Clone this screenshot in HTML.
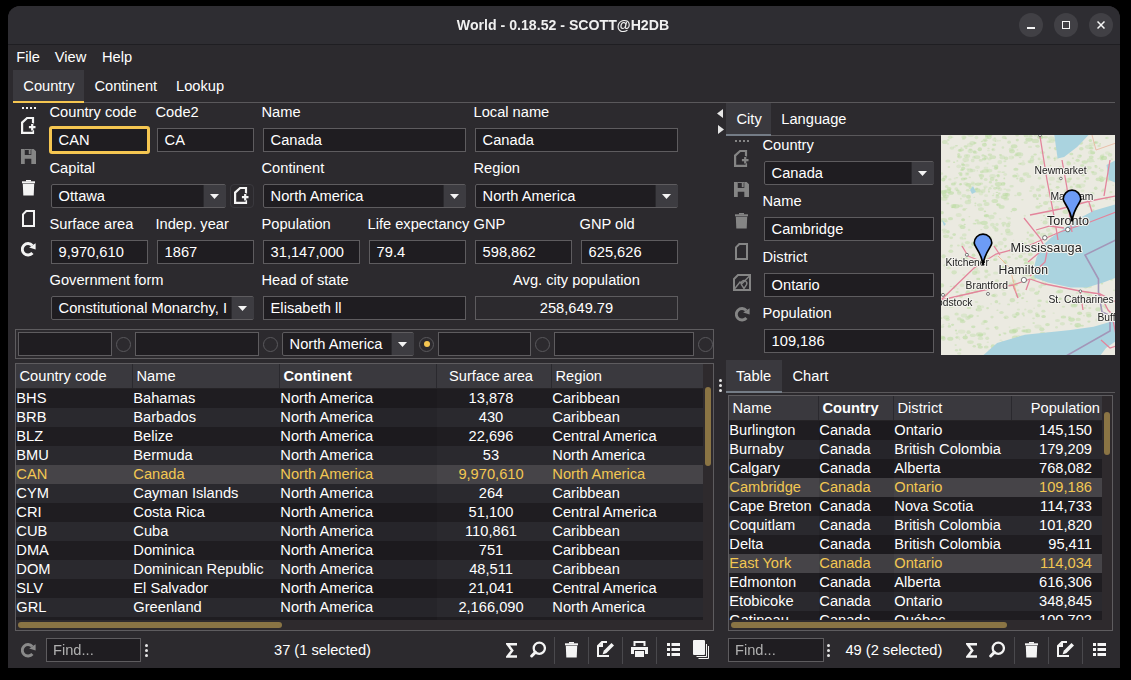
<!DOCTYPE html>
<html><head><meta charset="utf-8"><style>
html,body{margin:0;padding:0;background:#000;width:1131px;height:680px;overflow:hidden}
body{position:relative;font-family:"Liberation Sans",sans-serif;font-size:14.667px;color:#ffffff}
.t{position:absolute;white-space:pre;line-height:17px}
.r{position:absolute}
</style></head><body>
<div class="r" style="left:8px;top:6px;width:1112px;height:662px;background:#2c2a2e;border-radius:12px 12px 0 0"></div>
<div class="r" style="left:8px;top:6px;width:1112px;height:38px;background:#2e2d32;border-radius:12px 12px 0 0"></div>
<div class="r" style="left:8px;top:44px;width:1112px;height:1px;background:#1f1e22"></div>
<div class="t" style="left:7px;width:1112px;top:17px;text-align:center;font-weight:bold;font-size:14.15px;color:#f0f0f0;will-change:transform;">World - 0.18.52 - SCOTT@H2DB</div>
<div class="r" style="left:1019px;top:13px;width:24px;height:24px;border-radius:50%;background:#414045"></div>
<div class="r" style="left:1054px;top:13px;width:24px;height:24px;border-radius:50%;background:#414045"></div>
<div class="r" style="left:1089px;top:13px;width:24px;height:24px;border-radius:50%;background:#414045"></div>
<div class="r" style="left:1027px;top:27px;width:8px;height:1.5px;background:#f6f6f6"></div>
<div class="r" style="left:1062px;top:21px;width:8px;height:8px;border:1.5px solid #f6f6f6;box-sizing:border-box"></div>
<svg class="r" style="left:1097px;top:21px" width="8" height="8" viewBox="0 0 8 8"><path d="M0.5 0.5L7.5 7.5M7.5 0.5L0.5 7.5" stroke="#f6f6f6" stroke-width="1.5"/></svg>
<div class="t" style="left:16.30px;top:49px;">File</div>
<div class="t" style="left:54.80px;top:49px;">View</div>
<div class="t" style="left:101.90px;top:49px;">Help</div>
<div class="r" style="left:13px;top:70px;width:71px;height:31px;background:#3a393e"></div>
<div class="r" style="left:13px;top:102px;width:1102px;height:1px;background:#5a585b"></div>
<div class="r" style="left:13px;top:101px;width:71px;height:2px;background:#f5c651"></div>
<div class="t" style="left:23.30px;top:78px;">Country</div>
<div class="t" style="left:94.40px;top:78px;">Continent</div>
<div class="t" style="left:176.00px;top:78px;">Lookup</div>
<div class="r" style="left:22px;top:107px;width:2px;height:2px;background:#f4f4f4"></div><div class="r" style="left:26px;top:107px;width:2px;height:2px;background:#f4f4f4"></div><div class="r" style="left:30px;top:107px;width:2px;height:2px;background:#f4f4f4"></div><div class="r" style="left:34px;top:107px;width:2px;height:2px;background:#f4f4f4"></div>
<svg class="r" style="left:20.5px;top:116px" width="16" height="18" viewBox="0 0 16 18"><path d="M12 7.6V2H6.1L1.1 6.6V16.9H12V14.2" fill="none" stroke="#f4f4f4" stroke-width="2.2"/><path d="M7 11.2H15.6M11.2 7V15.4" stroke="#2c2a2e" stroke-width="1.2"/><path d="M7.9 11.2H14.5M11.2 7.9V14.5" stroke="#f4f4f4" stroke-width="2.2"/></svg>
<svg class="r" style="left:21px;top:149px" width="15" height="15" viewBox="0 0 16 16"><path d="M0 0H4V6.5H11V0H13.5L16 2.5V16H11V10.5H4V16H0Z" fill="#858585"/><rect x="4" y="0" width="7" height="1" fill="#858585"/><rect x="8.3" y="1" width="2" height="4.5" fill="#858585"/></svg>
<svg class="r" style="left:21.5px;top:180px" width="13" height="16" viewBox="0 0 13 16"><rect x="0" y="1.3" width="13" height="2" fill="#f4f4f4"/><rect x="4" y="0" width="5" height="1.6" fill="#f4f4f4"/><path d="M0.8 3.8H12.2L11.7 15.5H1.3Z" fill="#f4f4f4"/></svg>
<svg class="r" style="left:21.5px;top:210px" width="13" height="17" viewBox="0 0 13 17"><path d="M4.3 1H12V16H1V4.3Z" fill="none" stroke="#f4f4f4" stroke-width="2"/></svg>
<svg class="r" style="left:21px;top:242px" width="15" height="15" viewBox="0 0 15 15"><path d="M11.4 11A5.75 5.75 0 1 1 11.3 3.4" fill="none" stroke="#f4f4f4" stroke-width="2.9"/><path d="M14.6 1.2L14.6 7.6L8.2 5.6Z" fill="#f4f4f4"/></svg>
<div class="t" style="left:49.50px;top:104px;">Country code</div>
<div class="t" style="left:155.50px;top:104px;">Code2</div>
<div class="t" style="left:261.50px;top:104px;">Name</div>
<div class="t" style="left:473.50px;top:104px;">Local name</div>
<div class="r" style="left:51px;top:128px;width:97px;height:24px;background:#1f1d21;border:1px solid #5e5c5f;box-sizing:border-box"></div><div class="r" style="left:49px;top:126px;width:101px;height:28px;border:3px solid #f5c651;box-sizing:border-box;border-radius:3px"></div><div class="t" style="left:58.60px;top:132px;">CAN</div>
<div class="r" style="left:157px;top:128px;width:97px;height:24px;background:#1f1d21;border:1px solid #5e5c5f;box-sizing:border-box"></div><div class="t" style="left:164.60px;top:132px;">CA</div>
<div class="r" style="left:263px;top:128px;width:203px;height:24px;background:#1f1d21;border:1px solid #5e5c5f;box-sizing:border-box"></div><div class="t" style="left:270.60px;top:132px;">Canada</div>
<div class="r" style="left:475px;top:128px;width:203px;height:24px;background:#1f1d21;border:1px solid #5e5c5f;box-sizing:border-box"></div><div class="t" style="left:482.60px;top:132px;">Canada</div>
<div class="t" style="left:49.50px;top:160px;">Capital</div>
<div class="t" style="left:261.50px;top:160px;">Continent</div>
<div class="t" style="left:473.50px;top:160px;">Region</div>
<div class="r" style="left:51px;top:184px;width:175px;height:24px;background:#1f1d21;border:1px solid #5e5c5f;box-sizing:border-box;border-radius:2px"></div><div class="r" style="left:203px;top:185px;width:22px;height:22px;background:#3d3c41;border-left:1px solid #2a292d;border-radius:0 1px 1px 0"></div><svg class="r" style="left:210px;top:194px" width="9" height="5" viewBox="0 0 9 5"><path d="M0 0H9L4.5 5Z" fill="#f4f4f4"/></svg><div class="t" style="left:58.60px;top:188px;">Ottawa</div>
<div class="r" style="left:263px;top:184px;width:203px;height:24px;background:#1f1d21;border:1px solid #5e5c5f;box-sizing:border-box;border-radius:2px"></div><div class="r" style="left:443px;top:185px;width:22px;height:22px;background:#3d3c41;border-left:1px solid #2a292d;border-radius:0 1px 1px 0"></div><svg class="r" style="left:450px;top:194px" width="9" height="5" viewBox="0 0 9 5"><path d="M0 0H9L4.5 5Z" fill="#f4f4f4"/></svg><div class="t" style="left:270.60px;top:188px;">North America</div>
<div class="r" style="left:475px;top:184px;width:203px;height:24px;background:#1f1d21;border:1px solid #5e5c5f;box-sizing:border-box;border-radius:2px"></div><div class="r" style="left:655px;top:185px;width:22px;height:22px;background:#3d3c41;border-left:1px solid #2a292d;border-radius:0 1px 1px 0"></div><svg class="r" style="left:662px;top:194px" width="9" height="5" viewBox="0 0 9 5"><path d="M0 0H9L4.5 5Z" fill="#f4f4f4"/></svg><div class="t" style="left:482.60px;top:188px;">North America</div>
<div class="r" style="left:230px;top:184px;width:24px;height:24px;border:1px solid #3a393e;box-sizing:border-box;border-radius:4px"></div>
<svg class="r" style="left:234px;top:186px" width="16" height="18" viewBox="0 0 16 18"><path d="M12 7.6V2H6.1L1.1 6.6V16.9H12V14.2" fill="none" stroke="#f4f4f4" stroke-width="2.2"/><path d="M7 11.2H15.6M11.2 7V15.4" stroke="#2c2a2e" stroke-width="1.2"/><path d="M7.9 11.2H14.5M11.2 7.9V14.5" stroke="#f4f4f4" stroke-width="2.2"/></svg>
<div class="t" style="left:49.50px;top:216px;">Surface area</div>
<div class="r" style="left:51px;top:240px;width:97px;height:24px;background:#1f1d21;border:1px solid #5e5c5f;box-sizing:border-box"></div><div class="t" style="left:58.60px;top:244px;">9,970,610</div>
<div class="t" style="left:155.50px;top:216px;">Indep. year</div>
<div class="r" style="left:157px;top:240px;width:97px;height:24px;background:#1f1d21;border:1px solid #5e5c5f;box-sizing:border-box"></div><div class="t" style="left:164.60px;top:244px;">1867</div>
<div class="t" style="left:261.50px;top:216px;">Population</div>
<div class="r" style="left:263px;top:240px;width:97px;height:24px;background:#1f1d21;border:1px solid #5e5c5f;box-sizing:border-box"></div><div class="t" style="left:270.60px;top:244px;">31,147,000</div>
<div class="t" style="left:367.50px;top:216px;">Life expectancy</div>
<div class="r" style="left:369px;top:240px;width:97px;height:24px;background:#1f1d21;border:1px solid #5e5c5f;box-sizing:border-box"></div><div class="t" style="left:376.60px;top:244px;">79.4</div>
<div class="t" style="left:473.50px;top:216px;">GNP</div>
<div class="r" style="left:475px;top:240px;width:97px;height:24px;background:#1f1d21;border:1px solid #5e5c5f;box-sizing:border-box"></div><div class="t" style="left:482.60px;top:244px;">598,862</div>
<div class="t" style="left:579.50px;top:216px;">GNP old</div>
<div class="r" style="left:581px;top:240px;width:97px;height:24px;background:#1f1d21;border:1px solid #5e5c5f;box-sizing:border-box"></div><div class="t" style="left:588.60px;top:244px;">625,626</div>
<div class="t" style="left:49.50px;top:272px;">Government form</div>
<div class="t" style="left:261.50px;top:272px;">Head of state</div>
<div class="t" style="left:475px;width:203px;top:272px;text-align:center;">Avg. city population</div>
<div class="r" style="left:51px;top:296px;width:203px;height:24px;background:#1f1d21;border:1px solid #5e5c5f;box-sizing:border-box;border-radius:2px"></div><div class="r" style="left:231px;top:297px;width:22px;height:22px;background:#3d3c41;border-left:1px solid #2a292d;border-radius:0 1px 1px 0"></div><svg class="r" style="left:238px;top:306px" width="9" height="5" viewBox="0 0 9 5"><path d="M0 0H9L4.5 5Z" fill="#f4f4f4"/></svg><div class="t" style="left:58.60px;top:300px;">Constitutional Monarchy, I</div>
<div class="r" style="left:263px;top:296px;width:203px;height:24px;background:#1f1d21;border:1px solid #5e5c5f;box-sizing:border-box"></div><div class="t" style="left:270.60px;top:300px;">Elisabeth ll</div>
<div class="r" style="left:475px;top:296px;width:203px;height:24px;border:1px solid #5e5c5f;box-sizing:border-box"></div>
<div class="t" style="left:475px;width:203px;top:300px;text-align:center;">258,649.79</div>
<svg class="r" style="left:717px;top:109px" width="6" height="9" viewBox="0 0 6 9"><path d="M6 0V9L0 4.5Z" fill="#e6e6e6"/></svg>
<svg class="r" style="left:718px;top:125px" width="6" height="9" viewBox="0 0 6 9"><path d="M0 0V9L6 4.5Z" fill="#e6e6e6"/></svg>
<div class="r" style="left:719px;top:379px;width:3px;height:3px;border-radius:50%;background:#e6e6e6"></div><div class="r" style="left:719px;top:384px;width:3px;height:3px;border-radius:50%;background:#e6e6e6"></div><div class="r" style="left:719px;top:389px;width:3px;height:3px;border-radius:50%;background:#e6e6e6"></div>
<div class="r" style="left:15px;top:329px;width:699px;height:30px;border:1px solid #5e5c5f;box-sizing:border-box"></div>
<div class="r" style="left:18px;top:332px;width:94px;height:24px;background:#1f1d21;border:1px solid #5e5c5f;box-sizing:border-box"></div>
<div class="r" style="left:115.5px;top:336.5px;width:15px;height:15px;border-radius:50%;border:1px solid #59585c;box-sizing:border-box"></div>
<div class="r" style="left:135px;top:332px;width:124px;height:24px;background:#1f1d21;border:1px solid #5e5c5f;box-sizing:border-box"></div>
<div class="r" style="left:262.5px;top:336.5px;width:15px;height:15px;border-radius:50%;border:1px solid #59585c;box-sizing:border-box"></div>
<div class="r" style="left:282px;top:332px;width:132px;height:24px;background:#1f1d21;border:1px solid #5e5c5f;box-sizing:border-box;border-radius:2px"></div><div class="r" style="left:391px;top:333px;width:22px;height:22px;background:#3d3c41;border-left:1px solid #2a292d;border-radius:0 1px 1px 0"></div><svg class="r" style="left:398px;top:342px" width="9" height="5" viewBox="0 0 9 5"><path d="M0 0H9L4.5 5Z" fill="#f4f4f4"/></svg><div class="t" style="left:289.60px;top:336px;">North America</div>
<div class="r" style="left:419.0px;top:336.5px;width:15px;height:15px;border-radius:50%;border:1px solid #59585c;box-sizing:border-box"></div><div class="r" style="left:423.5px;top:341px;width:6px;height:6px;border-radius:50%;background:#f5c651"></div>
<div class="r" style="left:438px;top:332px;width:93px;height:24px;background:#1f1d21;border:1px solid #5e5c5f;box-sizing:border-box"></div>
<div class="r" style="left:534.5px;top:336.5px;width:15px;height:15px;border-radius:50%;border:1px solid #59585c;box-sizing:border-box"></div>
<div class="r" style="left:554px;top:332px;width:140px;height:24px;background:#1f1d21;border:1px solid #5e5c5f;box-sizing:border-box"></div>
<div class="r" style="left:698.0px;top:336.5px;width:15px;height:15px;border-radius:50%;border:1px solid #59585c;box-sizing:border-box"></div>
<div class="r" style="left:15px;top:363px;width:699px;height:268px;border:1px solid #5e5c5f;box-sizing:border-box"></div><div class="r" style="left:703px;top:364px;width:10px;height:266px;background:#2e2a2d"></div><div class="r" style="left:16px;top:620px;width:687px;height:10px;background:#2e2a2d"></div><div class="r" style="left:16px;top:364px;width:687px;height:24px;background:#3a393e"></div><div class="r" style="left:16px;top:388px;width:687px;height:1px;background:#252326"></div><div class="t" style="left:19.50px;top:368px;">Country code</div><div class="r" style="left:132px;top:364px;width:1px;height:24px;background:#2a292e"></div><div class="t" style="left:136.50px;top:368px;">Name</div><div class="r" style="left:279px;top:364px;width:1px;height:24px;background:#2a292e"></div><div class="t" style="left:283.50px;top:368px;font-weight:bold;">Continent</div><div class="r" style="left:436px;top:364px;width:1px;height:24px;background:#2a292e"></div><div class="t" style="left:437px;width:108px;top:368px;text-align:center;">Surface area</div><div class="r" style="left:551px;top:364px;width:1px;height:24px;background:#2a292e"></div><div class="t" style="left:555.50px;top:368px;">Region</div><div class="r" style="left:16px;top:389px;width:687px;height:231px;overflow:hidden"><div class="r" style="left:0;top:0px;width:687px;height:19px;background:#1f1d21"></div><div class="r" style="left:264px;top:0px;width:157px;height:19px;background:rgba(0,0,0,0.08)"></div><div class="t" style="left:0.30px;top:1px;">BHS</div><div class="t" style="left:117.30px;top:1px;">Bahamas</div><div class="t" style="left:264.30px;top:1px;">North America</div><div class="t" style="left:421px;width:108px;top:1px;text-align:center;">13,878</div><div class="t" style="left:536.30px;top:1px;">Caribbean</div><div class="r" style="left:0;top:19px;width:687px;height:19px;background:#2a292e"></div><div class="r" style="left:264px;top:19px;width:157px;height:19px;background:rgba(0,0,0,0.08)"></div><div class="t" style="left:0.30px;top:20px;">BRB</div><div class="t" style="left:117.30px;top:20px;">Barbados</div><div class="t" style="left:264.30px;top:20px;">North America</div><div class="t" style="left:421px;width:108px;top:20px;text-align:center;">430</div><div class="t" style="left:536.30px;top:20px;">Caribbean</div><div class="r" style="left:0;top:38px;width:687px;height:19px;background:#1f1d21"></div><div class="r" style="left:264px;top:38px;width:157px;height:19px;background:rgba(0,0,0,0.08)"></div><div class="t" style="left:0.30px;top:39px;">BLZ</div><div class="t" style="left:117.30px;top:39px;">Belize</div><div class="t" style="left:264.30px;top:39px;">North America</div><div class="t" style="left:421px;width:108px;top:39px;text-align:center;">22,696</div><div class="t" style="left:536.30px;top:39px;">Central America</div><div class="r" style="left:0;top:57px;width:687px;height:19px;background:#2a292e"></div><div class="r" style="left:264px;top:57px;width:157px;height:19px;background:rgba(0,0,0,0.08)"></div><div class="t" style="left:0.30px;top:58px;">BMU</div><div class="t" style="left:117.30px;top:58px;">Bermuda</div><div class="t" style="left:264.30px;top:58px;">North America</div><div class="t" style="left:421px;width:108px;top:58px;text-align:center;">53</div><div class="t" style="left:536.30px;top:58px;">North America</div><div class="r" style="left:0;top:76px;width:687px;height:19px;background:#464448"></div><div class="r" style="left:264px;top:76px;width:157px;height:19px;background:rgba(0,0,0,0.08)"></div><div class="t" style="left:0.30px;top:77px;color:#f2c752;">CAN</div><div class="t" style="left:117.30px;top:77px;color:#f2c752;">Canada</div><div class="t" style="left:264.30px;top:77px;color:#f2c752;">North America</div><div class="t" style="left:421px;width:108px;top:77px;text-align:center;color:#f2c752;">9,970,610</div><div class="t" style="left:536.30px;top:77px;color:#f2c752;">North America</div><div class="r" style="left:0;top:95px;width:687px;height:19px;background:#2a292e"></div><div class="r" style="left:264px;top:95px;width:157px;height:19px;background:rgba(0,0,0,0.08)"></div><div class="t" style="left:0.30px;top:96px;">CYM</div><div class="t" style="left:117.30px;top:96px;">Cayman Islands</div><div class="t" style="left:264.30px;top:96px;">North America</div><div class="t" style="left:421px;width:108px;top:96px;text-align:center;">264</div><div class="t" style="left:536.30px;top:96px;">Caribbean</div><div class="r" style="left:0;top:114px;width:687px;height:19px;background:#1f1d21"></div><div class="r" style="left:264px;top:114px;width:157px;height:19px;background:rgba(0,0,0,0.08)"></div><div class="t" style="left:0.30px;top:115px;">CRI</div><div class="t" style="left:117.30px;top:115px;">Costa Rica</div><div class="t" style="left:264.30px;top:115px;">North America</div><div class="t" style="left:421px;width:108px;top:115px;text-align:center;">51,100</div><div class="t" style="left:536.30px;top:115px;">Central America</div><div class="r" style="left:0;top:133px;width:687px;height:19px;background:#2a292e"></div><div class="r" style="left:264px;top:133px;width:157px;height:19px;background:rgba(0,0,0,0.08)"></div><div class="t" style="left:0.30px;top:134px;">CUB</div><div class="t" style="left:117.30px;top:134px;">Cuba</div><div class="t" style="left:264.30px;top:134px;">North America</div><div class="t" style="left:421px;width:108px;top:134px;text-align:center;">110,861</div><div class="t" style="left:536.30px;top:134px;">Caribbean</div><div class="r" style="left:0;top:152px;width:687px;height:19px;background:#1f1d21"></div><div class="r" style="left:264px;top:152px;width:157px;height:19px;background:rgba(0,0,0,0.08)"></div><div class="t" style="left:0.30px;top:153px;">DMA</div><div class="t" style="left:117.30px;top:153px;">Dominica</div><div class="t" style="left:264.30px;top:153px;">North America</div><div class="t" style="left:421px;width:108px;top:153px;text-align:center;">751</div><div class="t" style="left:536.30px;top:153px;">Caribbean</div><div class="r" style="left:0;top:171px;width:687px;height:19px;background:#2a292e"></div><div class="r" style="left:264px;top:171px;width:157px;height:19px;background:rgba(0,0,0,0.08)"></div><div class="t" style="left:0.30px;top:172px;">DOM</div><div class="t" style="left:117.30px;top:172px;">Dominican Republic</div><div class="t" style="left:264.30px;top:172px;">North America</div><div class="t" style="left:421px;width:108px;top:172px;text-align:center;">48,511</div><div class="t" style="left:536.30px;top:172px;">Caribbean</div><div class="r" style="left:0;top:190px;width:687px;height:19px;background:#1f1d21"></div><div class="r" style="left:264px;top:190px;width:157px;height:19px;background:rgba(0,0,0,0.08)"></div><div class="t" style="left:0.30px;top:191px;">SLV</div><div class="t" style="left:117.30px;top:191px;">El Salvador</div><div class="t" style="left:264.30px;top:191px;">North America</div><div class="t" style="left:421px;width:108px;top:191px;text-align:center;">21,041</div><div class="t" style="left:536.30px;top:191px;">Central America</div><div class="r" style="left:0;top:209px;width:687px;height:19px;background:#2a292e"></div><div class="r" style="left:264px;top:209px;width:157px;height:19px;background:rgba(0,0,0,0.08)"></div><div class="t" style="left:0.30px;top:210px;">GRL</div><div class="t" style="left:117.30px;top:210px;">Greenland</div><div class="t" style="left:264.30px;top:210px;">North America</div><div class="t" style="left:421px;width:108px;top:210px;text-align:center;">2,166,090</div><div class="t" style="left:536.30px;top:210px;">North America</div><div class="r" style="left:0;top:228px;width:687px;height:19px;background:#1f1d21"></div><div class="r" style="left:264px;top:228px;width:157px;height:19px;background:rgba(0,0,0,0.08)"></div><div class="t" style="left:0.30px;top:229px;"></div><div class="t" style="left:117.30px;top:229px;"></div><div class="t" style="left:264.30px;top:229px;"></div><div class="t" style="left:421px;width:108px;top:229px;text-align:center;"></div><div class="t" style="left:536.30px;top:229px;"></div></div><div class="r" style="left:705px;top:387px;width:6px;height:79px;background:#8a7444;border-radius:3px"></div><div class="r" style="left:18px;top:622px;width:264px;height:6px;background:#8a7444;border-radius:3px"></div>
<svg class="r" style="left:21px;top:643px" width="15" height="15" viewBox="0 0 15 15"><path d="M11.4 11A5.75 5.75 0 1 1 11.3 3.4" fill="none" stroke="#8a8a8a" stroke-width="2.9"/><path d="M14.6 1.2L14.6 7.6L8.2 5.6Z" fill="#8a8a8a"/></svg>
<div class="r" style="left:46px;top:638px;width:95px;height:24px;background:#1f1d21;border:1px solid #5e5c5f;box-sizing:border-box"></div>
<div class="t" style="left:53.30px;top:642px;color:#b0b0b0;will-change:transform;">Find...</div>
<div class="r" style="left:145px;top:643.5px;width:3px;height:3px;border-radius:50%;background:#e6e6e6"></div><div class="r" style="left:145px;top:648.5px;width:3px;height:3px;border-radius:50%;background:#e6e6e6"></div><div class="r" style="left:145px;top:653.5px;width:3px;height:3px;border-radius:50%;background:#e6e6e6"></div>
<div class="t" style="left:274.00px;top:642px;">37 (1 selected)</div>
<svg class="r" style="left:505.5px;top:642.5px" width="12" height="15" viewBox="0 0 12 15"><path d="M11 1.3H1.6L6.2 7.4L1.6 13.5H11" fill="none" stroke="#f4f4f4" stroke-width="2.5" stroke-linejoin="miter" stroke-miterlimit="3"/></svg>
<svg class="r" style="left:529.7px;top:641px" width="16" height="17" viewBox="0 0 16 17"><circle cx="9.3" cy="7.2" r="5.6" fill="none" stroke="#f4f4f4" stroke-width="2.3"/><path d="M5.3 11.4L1.7 15" stroke="#f4f4f4" stroke-width="3" stroke-linecap="round"/></svg>
<div class="r" style="left:554px;top:637px;width:1px;height:27px;background:#4a494d"></div>
<div class="r" style="left:588px;top:637px;width:1px;height:27px;background:#4a494d"></div>
<div class="r" style="left:622px;top:637px;width:1px;height:27px;background:#4a494d"></div>
<div class="r" style="left:656px;top:637px;width:1px;height:27px;background:#4a494d"></div>
<svg class="r" style="left:564.8px;top:642px" width="13" height="16" viewBox="0 0 13 16"><rect x="0" y="1.3" width="13" height="2" fill="#f4f4f4"/><rect x="4" y="0" width="5" height="1.6" fill="#f4f4f4"/><path d="M0.8 3.8H12.2L11.7 15.5H1.3Z" fill="#f4f4f4"/></svg>
<svg class="r" style="left:596.5px;top:641px" width="18" height="16" viewBox="0 0 18 16"><path d="M5 1H10 M12 15H1V5L5 1V5H1" fill="none" stroke="#f4f4f4" stroke-width="2"/><path d="M6.5 12.5L7 9.5L14.5 2L17 4.5L9.5 12Z" fill="#f4f4f4"/><path d="M5.5 13.5L7 9.5L9.5 12Z" fill="#f4f4f4"/></svg>
<svg class="r" style="left:631px;top:641px" width="17" height="16" viewBox="0 0 17 16"><path d="M3.5 5V1H13.5V5" fill="none" stroke="#f4f4f4" stroke-width="2"/><path d="M0 6H17V13H14V9H3V13H0Z" fill="#f4f4f4"/><rect x="4" y="10" width="9" height="6" fill="#f4f4f4"/></svg>
<svg class="r" style="left:667px;top:643px" width="14" height="13" viewBox="0 0 14 13"><rect x="0" y="0" width="3" height="3" fill="#f4f4f4"/><rect x="4.5" y="0" width="8.5" height="3" fill="#f4f4f4"/><rect x="0" y="5" width="3" height="3" fill="#f4f4f4"/><rect x="4.5" y="5" width="8.5" height="3" fill="#f4f4f4"/><rect x="0" y="10" width="3" height="3" fill="#f4f4f4"/><rect x="4.5" y="10" width="8.5" height="3" fill="#f4f4f4"/></svg>
<svg class="r" style="left:692.5px;top:640px" width="16" height="19" viewBox="0 0 16 19"><path d="M3.5 16.5H13.5V4 M5.5 18.5H15.5V6" fill="none" stroke="#f4f4f4" stroke-width="1"/><rect x="0" y="0" width="12" height="15" rx="1" fill="#f4f4f4"/></svg>
<div class="r" style="left:726px;top:103px;width:45px;height:32px;background:#3a393e"></div>
<div class="r" style="left:726px;top:135px;width:389px;height:1px;background:#5a585b"></div>
<div class="r" style="left:726px;top:134px;width:45px;height:2px;background:#747c86"></div>
<div class="t" style="left:736.50px;top:111px;">City</div>
<div class="t" style="left:781.30px;top:111px;">Language</div>
<div class="r" style="left:735px;top:140px;width:2px;height:2px;background:#858585"></div><div class="r" style="left:739px;top:140px;width:2px;height:2px;background:#858585"></div><div class="r" style="left:743px;top:140px;width:2px;height:2px;background:#858585"></div><div class="r" style="left:747px;top:140px;width:2px;height:2px;background:#858585"></div>
<svg class="r" style="left:733.5px;top:149px" width="16" height="18" viewBox="0 0 16 18"><path d="M12 7.6V2H6.1L1.1 6.6V16.9H12V14.2" fill="none" stroke="#858585" stroke-width="2.2"/><path d="M7 11.2H15.6M11.2 7V15.4" stroke="#2c2a2e" stroke-width="1.2"/><path d="M7.9 11.2H14.5M11.2 7.9V14.5" stroke="#858585" stroke-width="2.2"/></svg>
<svg class="r" style="left:734px;top:182px" width="15" height="15" viewBox="0 0 16 16"><path d="M0 0H4V6.5H11V0H13.5L16 2.5V16H11V10.5H4V16H0Z" fill="#858585"/><rect x="4" y="0" width="7" height="1" fill="#858585"/><rect x="8.3" y="1" width="2" height="4.5" fill="#858585"/></svg>
<svg class="r" style="left:735px;top:213px" width="13" height="16" viewBox="0 0 13 16"><rect x="0" y="1.3" width="13" height="2" fill="#858585"/><rect x="4" y="0" width="5" height="1.6" fill="#858585"/><path d="M0.8 3.8H12.2L11.7 15.5H1.3Z" fill="#858585"/></svg>
<svg class="r" style="left:735px;top:243px" width="13" height="17" viewBox="0 0 13 17"><path d="M4.3 1H12V16H1V4.3Z" fill="none" stroke="#858585" stroke-width="2"/></svg>
<svg class="r" style="left:733px;top:273.5px" width="18" height="18" viewBox="0 0 18 18"><path d="M1 5L5 1H17V16H1Z" fill="none" stroke="#858585" stroke-width="2"/><path d="M1.5 15L7 8L9 9.5L16.5 2" fill="none" stroke="#858585" stroke-width="1.4"/><path d="M11 14.5L8.6 10.8A2.8 2.8 0 1 1 13.4 10.8Z" fill="none" stroke="#858585" stroke-width="1.4"/></svg>
<svg class="r" style="left:735px;top:306.5px" width="15" height="15" viewBox="0 0 15 15"><path d="M11.4 11A5.75 5.75 0 1 1 11.3 3.4" fill="none" stroke="#858585" stroke-width="2.9"/><path d="M14.6 1.2L14.6 7.6L8.2 5.6Z" fill="#858585"/></svg>
<div class="t" style="left:762.50px;top:137px;">Country</div>
<div class="r" style="left:764px;top:161px;width:170px;height:24px;background:#1f1d21;border:1px solid #5e5c5f;box-sizing:border-box;border-radius:2px"></div><div class="r" style="left:911px;top:162px;width:22px;height:22px;background:#3d3c41;border-left:1px solid #2a292d;border-radius:0 1px 1px 0"></div><svg class="r" style="left:918px;top:171px" width="9" height="5" viewBox="0 0 9 5"><path d="M0 0H9L4.5 5Z" fill="#f4f4f4"/></svg><div class="t" style="left:771.60px;top:165px;">Canada</div>
<div class="t" style="left:762.50px;top:193px;">Name</div>
<div class="r" style="left:764px;top:217px;width:170px;height:24px;background:#1f1d21;border:1px solid #5e5c5f;box-sizing:border-box"></div><div class="t" style="left:771.60px;top:221px;">Cambridge</div>
<div class="t" style="left:762.50px;top:249px;">District</div>
<div class="r" style="left:764px;top:273px;width:170px;height:24px;background:#1f1d21;border:1px solid #5e5c5f;box-sizing:border-box"></div><div class="t" style="left:771.60px;top:277px;">Ontario</div>
<div class="t" style="left:762.50px;top:305px;">Population</div>
<div class="r" style="left:764px;top:329px;width:170px;height:24px;background:#1f1d21;border:1px solid #5e5c5f;box-sizing:border-box"></div><div class="t" style="left:771.60px;top:333px;">109,186</div>
<svg class="r" style="left:941px;top:135px" width="174" height="220" viewBox="941 135 174 220"><defs><clipPath id="mc"><rect x="941" y="135" width="174" height="220"/></clipPath></defs><g clip-path="url(#mc)"><rect x="941" y="135" width="174" height="220" fill="#ebeae1"/><ellipse cx="997.3" cy="168.2" rx="1.0" ry="0.7" fill="#b9dba0" opacity="0.38"/><ellipse cx="951.1" cy="246.6" rx="1.4" ry="1.3" fill="#b9dba0" opacity="0.28"/><ellipse cx="1014.9" cy="316.9" rx="1.4" ry="1.0" fill="#b9dba0" opacity="0.58"/><ellipse cx="949.1" cy="323.9" rx="0.9" ry="0.8" fill="#b9dba0" opacity="0.36"/><ellipse cx="1083.0" cy="174.8" rx="2.1" ry="1.6" fill="#b9dba0" opacity="0.44"/><ellipse cx="951.9" cy="148.1" rx="2.3" ry="1.7" fill="#b9dba0" opacity="0.36"/><ellipse cx="1042.9" cy="234.7" rx="2.9" ry="1.9" fill="#b9dba0" opacity="0.34"/><ellipse cx="967.4" cy="242.6" rx="2.7" ry="1.7" fill="#b9dba0" opacity="0.45"/><ellipse cx="1044.4" cy="262.6" rx="3.4" ry="1.9" fill="#b9dba0" opacity="0.42"/><ellipse cx="1056.6" cy="148.3" rx="2.9" ry="1.6" fill="#b9dba0" opacity="0.54"/><ellipse cx="990.5" cy="219.9" rx="0.9" ry="0.6" fill="#b9dba0" opacity="0.31"/><ellipse cx="961.4" cy="148.0" rx="1.0" ry="0.8" fill="#b9dba0" opacity="0.39"/><ellipse cx="1092.6" cy="152.7" rx="2.5" ry="1.5" fill="#b9dba0" opacity="0.54"/><ellipse cx="1091.3" cy="196.3" rx="2.0" ry="1.2" fill="#b9dba0" opacity="0.59"/><ellipse cx="967.3" cy="173.8" rx="1.4" ry="1.0" fill="#b9dba0" opacity="0.46"/><ellipse cx="986.7" cy="135.9" rx="1.7" ry="1.2" fill="#b9dba0" opacity="0.58"/><ellipse cx="1009.3" cy="222.8" rx="1.7" ry="1.6" fill="#b9dba0" opacity="0.27"/><ellipse cx="977.3" cy="170.7" rx="0.7" ry="0.7" fill="#b9dba0" opacity="0.30"/><ellipse cx="958.7" cy="215.0" rx="3.0" ry="2.0" fill="#b9dba0" opacity="0.30"/><ellipse cx="984.9" cy="211.4" rx="1.3" ry="0.8" fill="#b9dba0" opacity="0.60"/><ellipse cx="1022.1" cy="241.4" rx="1.0" ry="0.8" fill="#b9dba0" opacity="0.34"/><ellipse cx="1085.2" cy="170.5" rx="3.0" ry="2.1" fill="#b9dba0" opacity="0.30"/><ellipse cx="1035.5" cy="140.9" rx="3.7" ry="2.2" fill="#b9dba0" opacity="0.49"/><ellipse cx="986.4" cy="215.7" rx="2.6" ry="1.8" fill="#b9dba0" opacity="0.52"/><ellipse cx="998.4" cy="184.1" rx="3.7" ry="2.2" fill="#b9dba0" opacity="0.53"/><ellipse cx="1083.4" cy="297.8" rx="1.8" ry="1.4" fill="#b9dba0" opacity="0.26"/><ellipse cx="945.9" cy="196.5" rx="3.0" ry="1.7" fill="#b9dba0" opacity="0.41"/><ellipse cx="1004.4" cy="183.5" rx="1.1" ry="0.9" fill="#b9dba0" opacity="0.47"/><ellipse cx="1097.7" cy="319.9" rx="2.7" ry="1.6" fill="#b9dba0" opacity="0.28"/><ellipse cx="1071.5" cy="240.2" rx="2.4" ry="1.9" fill="#b9dba0" opacity="0.53"/><ellipse cx="1110.1" cy="222.1" rx="3.3" ry="2.1" fill="#b9dba0" opacity="0.31"/><ellipse cx="963.1" cy="168.3" rx="2.1" ry="1.9" fill="#b9dba0" opacity="0.54"/><ellipse cx="1111.6" cy="279.6" rx="1.6" ry="1.5" fill="#b9dba0" opacity="0.25"/><ellipse cx="1109.9" cy="277.9" rx="2.8" ry="2.1" fill="#b9dba0" opacity="0.56"/><ellipse cx="1084.8" cy="181.4" rx="1.3" ry="1.1" fill="#b9dba0" opacity="0.46"/><ellipse cx="986.1" cy="227.2" rx="2.6" ry="2.1" fill="#b9dba0" opacity="0.41"/><ellipse cx="1042.5" cy="333.9" rx="2.9" ry="2.1" fill="#b9dba0" opacity="0.44"/><ellipse cx="1032.1" cy="139.1" rx="0.9" ry="0.9" fill="#b9dba0" opacity="0.53"/><ellipse cx="1037.8" cy="206.7" rx="2.4" ry="1.5" fill="#b9dba0" opacity="0.29"/><ellipse cx="1038.5" cy="189.7" rx="2.6" ry="1.8" fill="#b9dba0" opacity="0.45"/><ellipse cx="1073.2" cy="335.7" rx="2.2" ry="1.6" fill="#b9dba0" opacity="0.43"/><ellipse cx="1061.5" cy="234.5" rx="2.4" ry="1.4" fill="#b9dba0" opacity="0.49"/><ellipse cx="1093.5" cy="342.3" rx="2.6" ry="1.5" fill="#b9dba0" opacity="0.54"/><ellipse cx="964.9" cy="161.8" rx="0.9" ry="0.7" fill="#b9dba0" opacity="0.28"/><ellipse cx="979.2" cy="344.6" rx="2.5" ry="1.4" fill="#b9dba0" opacity="0.54"/><ellipse cx="969.1" cy="229.9" rx="1.3" ry="1.1" fill="#b9dba0" opacity="0.36"/><ellipse cx="1066.7" cy="139.3" rx="1.3" ry="1.3" fill="#b9dba0" opacity="0.37"/><ellipse cx="1049.6" cy="247.7" rx="3.5" ry="2.2" fill="#b9dba0" opacity="0.59"/><ellipse cx="959.2" cy="193.4" rx="2.2" ry="1.8" fill="#b9dba0" opacity="0.30"/><ellipse cx="986.0" cy="167.9" rx="2.4" ry="1.5" fill="#b9dba0" opacity="0.28"/><ellipse cx="951.0" cy="286.4" rx="1.3" ry="0.7" fill="#b9dba0" opacity="0.47"/><ellipse cx="952.6" cy="324.8" rx="1.6" ry="1.1" fill="#b9dba0" opacity="0.57"/><ellipse cx="987.6" cy="163.4" rx="1.1" ry="1.0" fill="#b9dba0" opacity="0.31"/><ellipse cx="949.8" cy="179.4" rx="1.7" ry="1.1" fill="#b9dba0" opacity="0.35"/><ellipse cx="1028.0" cy="174.1" rx="0.8" ry="0.6" fill="#b9dba0" opacity="0.26"/><ellipse cx="1068.6" cy="256.2" rx="2.4" ry="1.4" fill="#b9dba0" opacity="0.29"/><ellipse cx="1083.5" cy="230.1" rx="2.5" ry="1.9" fill="#b9dba0" opacity="0.43"/><ellipse cx="1060.7" cy="351.1" rx="3.0" ry="1.9" fill="#b9dba0" opacity="0.47"/><ellipse cx="1011.4" cy="211.5" rx="0.9" ry="0.8" fill="#b9dba0" opacity="0.51"/><ellipse cx="985.5" cy="170.9" rx="3.3" ry="1.9" fill="#b9dba0" opacity="0.48"/><ellipse cx="990.1" cy="188.3" rx="1.5" ry="1.3" fill="#b9dba0" opacity="0.41"/><ellipse cx="994.9" cy="213.4" rx="1.7" ry="1.2" fill="#b9dba0" opacity="0.43"/><ellipse cx="976.0" cy="246.0" rx="1.1" ry="1.0" fill="#b9dba0" opacity="0.39"/><ellipse cx="948.3" cy="139.9" rx="1.4" ry="1.0" fill="#b9dba0" opacity="0.44"/><ellipse cx="1094.0" cy="220.7" rx="2.4" ry="2.2" fill="#b9dba0" opacity="0.50"/><ellipse cx="1082.3" cy="165.6" rx="2.3" ry="1.4" fill="#b9dba0" opacity="0.53"/><ellipse cx="1059.8" cy="287.5" rx="0.7" ry="0.6" fill="#b9dba0" opacity="0.38"/><ellipse cx="959.3" cy="318.9" rx="2.4" ry="1.6" fill="#b9dba0" opacity="0.49"/><ellipse cx="1026.1" cy="135.7" rx="2.5" ry="1.8" fill="#b9dba0" opacity="0.44"/><ellipse cx="1055.7" cy="149.5" rx="1.1" ry="1.0" fill="#b9dba0" opacity="0.34"/><ellipse cx="1067.9" cy="180.1" rx="3.0" ry="2.2" fill="#b9dba0" opacity="0.38"/><ellipse cx="1048.4" cy="276.4" rx="1.0" ry="0.8" fill="#b9dba0" opacity="0.51"/><ellipse cx="994.0" cy="259.9" rx="0.8" ry="0.7" fill="#b9dba0" opacity="0.49"/><ellipse cx="1061.4" cy="283.7" rx="2.0" ry="1.4" fill="#b9dba0" opacity="0.41"/><ellipse cx="961.6" cy="331.6" rx="3.8" ry="2.2" fill="#b9dba0" opacity="0.26"/><ellipse cx="1019.2" cy="194.1" rx="2.5" ry="2.1" fill="#b9dba0" opacity="0.45"/><ellipse cx="964.1" cy="315.4" rx="3.2" ry="2.0" fill="#b9dba0" opacity="0.33"/><ellipse cx="1097.2" cy="242.0" rx="0.8" ry="0.6" fill="#b9dba0" opacity="0.41"/><ellipse cx="993.5" cy="166.0" rx="1.8" ry="1.1" fill="#b9dba0" opacity="0.25"/><ellipse cx="1071.6" cy="319.6" rx="3.3" ry="2.1" fill="#b9dba0" opacity="0.57"/><ellipse cx="991.4" cy="216.9" rx="3.2" ry="2.2" fill="#b9dba0" opacity="0.38"/><ellipse cx="1015.5" cy="195.5" rx="1.3" ry="0.8" fill="#b9dba0" opacity="0.35"/><ellipse cx="1103.8" cy="189.9" rx="1.6" ry="1.4" fill="#b9dba0" opacity="0.38"/><ellipse cx="1036.6" cy="293.3" rx="2.4" ry="1.8" fill="#b9dba0" opacity="0.51"/><ellipse cx="1053.1" cy="198.0" rx="2.3" ry="2.1" fill="#b9dba0" opacity="0.42"/><ellipse cx="1110.9" cy="192.2" rx="1.6" ry="1.1" fill="#b9dba0" opacity="0.39"/><ellipse cx="970.1" cy="170.6" rx="2.9" ry="2.0" fill="#b9dba0" opacity="0.33"/><ellipse cx="1098.7" cy="354.2" rx="1.0" ry="0.8" fill="#b9dba0" opacity="0.28"/><ellipse cx="1000.5" cy="155.0" rx="1.5" ry="1.0" fill="#b9dba0" opacity="0.56"/><ellipse cx="1071.4" cy="225.8" rx="1.9" ry="1.4" fill="#b9dba0" opacity="0.37"/><ellipse cx="962.9" cy="245.7" rx="2.3" ry="2.0" fill="#b9dba0" opacity="0.34"/><ellipse cx="984.2" cy="222.9" rx="3.6" ry="2.1" fill="#b9dba0" opacity="0.56"/><ellipse cx="944.8" cy="142.1" rx="2.8" ry="2.0" fill="#b9dba0" opacity="0.46"/><ellipse cx="984.2" cy="159.0" rx="2.2" ry="1.4" fill="#b9dba0" opacity="0.58"/><ellipse cx="1020.6" cy="256.3" rx="2.2" ry="1.9" fill="#b9dba0" opacity="0.57"/><ellipse cx="1053.3" cy="201.8" rx="1.5" ry="1.0" fill="#b9dba0" opacity="0.49"/><ellipse cx="960.5" cy="150.5" rx="2.0" ry="1.5" fill="#b9dba0" opacity="0.33"/><ellipse cx="1045.6" cy="137.3" rx="2.4" ry="1.3" fill="#b9dba0" opacity="0.48"/><ellipse cx="1094.8" cy="239.6" rx="1.8" ry="1.0" fill="#b9dba0" opacity="0.50"/><ellipse cx="994.5" cy="139.8" rx="2.2" ry="1.7" fill="#b9dba0" opacity="0.34"/><ellipse cx="1057.1" cy="338.5" rx="0.8" ry="0.7" fill="#b9dba0" opacity="0.40"/><ellipse cx="1059.8" cy="178.6" rx="2.5" ry="1.8" fill="#b9dba0" opacity="0.32"/><ellipse cx="981.2" cy="183.7" rx="1.9" ry="1.1" fill="#b9dba0" opacity="0.42"/><ellipse cx="973.6" cy="184.1" rx="2.9" ry="1.7" fill="#b9dba0" opacity="0.30"/><ellipse cx="965.7" cy="146.4" rx="2.1" ry="1.2" fill="#b9dba0" opacity="0.56"/><ellipse cx="998.3" cy="175.8" rx="1.8" ry="1.8" fill="#b9dba0" opacity="0.48"/><ellipse cx="1006.9" cy="217.3" rx="0.9" ry="0.9" fill="#b9dba0" opacity="0.35"/><ellipse cx="1002.2" cy="345.2" rx="2.5" ry="2.1" fill="#b9dba0" opacity="0.37"/><ellipse cx="1084.0" cy="315.8" rx="0.9" ry="0.7" fill="#b9dba0" opacity="0.38"/><ellipse cx="1101.0" cy="177.5" rx="2.1" ry="2.0" fill="#b9dba0" opacity="0.39"/><ellipse cx="1082.3" cy="303.7" rx="0.7" ry="0.7" fill="#b9dba0" opacity="0.57"/><ellipse cx="1048.4" cy="192.7" rx="1.4" ry="1.1" fill="#b9dba0" opacity="0.25"/><ellipse cx="1072.5" cy="336.6" rx="2.2" ry="2.1" fill="#b9dba0" opacity="0.33"/><ellipse cx="1008.3" cy="190.2" rx="2.4" ry="1.4" fill="#b9dba0" opacity="0.31"/><ellipse cx="1075.5" cy="268.6" rx="1.4" ry="1.1" fill="#b9dba0" opacity="0.52"/><ellipse cx="954.7" cy="178.4" rx="1.0" ry="1.0" fill="#b9dba0" opacity="0.26"/><ellipse cx="1094.7" cy="352.3" rx="0.8" ry="0.7" fill="#b9dba0" opacity="0.42"/><ellipse cx="1064.5" cy="233.3" rx="1.9" ry="1.3" fill="#b9dba0" opacity="0.49"/><ellipse cx="962.1" cy="320.0" rx="2.0" ry="1.5" fill="#b9dba0" opacity="0.51"/><ellipse cx="975.7" cy="189.4" rx="1.4" ry="0.8" fill="#b9dba0" opacity="0.45"/><ellipse cx="1054.7" cy="353.0" rx="2.3" ry="1.4" fill="#b9dba0" opacity="0.54"/><ellipse cx="1100.1" cy="143.9" rx="0.9" ry="0.8" fill="#b9dba0" opacity="0.59"/><ellipse cx="1042.5" cy="339.6" rx="2.7" ry="2.0" fill="#b9dba0" opacity="0.34"/><ellipse cx="1076.3" cy="343.1" rx="2.3" ry="1.6" fill="#b9dba0" opacity="0.33"/><ellipse cx="1005.2" cy="166.1" rx="1.5" ry="1.0" fill="#b9dba0" opacity="0.48"/><ellipse cx="976.4" cy="137.5" rx="1.9" ry="1.7" fill="#b9dba0" opacity="0.36"/><ellipse cx="976.4" cy="310.0" rx="0.8" ry="0.7" fill="#b9dba0" opacity="0.39"/><ellipse cx="1036.7" cy="275.6" rx="1.3" ry="0.9" fill="#b9dba0" opacity="0.39"/><ellipse cx="995.4" cy="259.6" rx="2.1" ry="1.3" fill="#b9dba0" opacity="0.60"/><ellipse cx="1004.3" cy="178.4" rx="0.9" ry="0.9" fill="#b9dba0" opacity="0.57"/><ellipse cx="1014.7" cy="315.5" rx="2.8" ry="2.0" fill="#b9dba0" opacity="0.31"/><ellipse cx="943.6" cy="256.3" rx="2.2" ry="2.1" fill="#b9dba0" opacity="0.47"/><ellipse cx="1005.5" cy="246.0" rx="1.5" ry="1.1" fill="#b9dba0" opacity="0.57"/><ellipse cx="1109.2" cy="178.4" rx="3.8" ry="2.1" fill="#b9dba0" opacity="0.42"/><ellipse cx="950.3" cy="338.8" rx="3.1" ry="2.0" fill="#b9dba0" opacity="0.54"/><ellipse cx="968.9" cy="307.9" rx="2.1" ry="1.2" fill="#b9dba0" opacity="0.54"/><ellipse cx="972.8" cy="183.0" rx="1.9" ry="1.4" fill="#b9dba0" opacity="0.29"/><ellipse cx="947.6" cy="319.4" rx="2.2" ry="1.6" fill="#b9dba0" opacity="0.47"/><ellipse cx="994.3" cy="227.4" rx="2.0" ry="1.3" fill="#b9dba0" opacity="0.41"/><ellipse cx="1017.3" cy="140.1" rx="1.6" ry="1.4" fill="#b9dba0" opacity="0.52"/><ellipse cx="1076.7" cy="235.8" rx="1.5" ry="1.4" fill="#b9dba0" opacity="0.29"/><ellipse cx="1015.9" cy="155.2" rx="1.5" ry="1.4" fill="#b9dba0" opacity="0.47"/><ellipse cx="1030.0" cy="146.9" rx="2.1" ry="1.2" fill="#b9dba0" opacity="0.30"/><ellipse cx="968.6" cy="332.2" rx="2.1" ry="1.9" fill="#b9dba0" opacity="0.43"/><ellipse cx="1101.1" cy="180.8" rx="1.8" ry="1.4" fill="#b9dba0" opacity="0.26"/><ellipse cx="972.7" cy="170.5" rx="2.9" ry="1.7" fill="#b9dba0" opacity="0.31"/><ellipse cx="1077.6" cy="160.3" rx="2.1" ry="1.6" fill="#b9dba0" opacity="0.56"/><ellipse cx="959.2" cy="353.5" rx="2.0" ry="1.2" fill="#b9dba0" opacity="0.34"/><ellipse cx="1113.3" cy="262.0" rx="2.5" ry="1.8" fill="#b9dba0" opacity="0.31"/><ellipse cx="1042.9" cy="281.0" rx="0.6" ry="0.6" fill="#b9dba0" opacity="0.30"/><ellipse cx="1048.2" cy="230.1" rx="2.2" ry="2.0" fill="#b9dba0" opacity="0.33"/><ellipse cx="1054.6" cy="139.9" rx="1.3" ry="1.2" fill="#b9dba0" opacity="0.38"/><ellipse cx="976.5" cy="272.3" rx="1.4" ry="0.8" fill="#b9dba0" opacity="0.34"/><ellipse cx="967.0" cy="156.1" rx="3.2" ry="2.0" fill="#b9dba0" opacity="0.39"/><ellipse cx="987.0" cy="137.5" rx="1.9" ry="1.5" fill="#b9dba0" opacity="0.48"/><ellipse cx="984.2" cy="333.8" rx="1.9" ry="1.5" fill="#b9dba0" opacity="0.33"/><ellipse cx="951.2" cy="306.4" rx="2.6" ry="1.5" fill="#b9dba0" opacity="0.30"/><ellipse cx="975.7" cy="268.8" rx="2.7" ry="1.6" fill="#b9dba0" opacity="0.31"/><ellipse cx="994.8" cy="201.1" rx="3.3" ry="2.0" fill="#b9dba0" opacity="0.50"/><ellipse cx="1022.0" cy="298.2" rx="1.0" ry="1.0" fill="#b9dba0" opacity="0.33"/><ellipse cx="987.3" cy="256.8" rx="2.6" ry="1.9" fill="#b9dba0" opacity="0.34"/><ellipse cx="1052.7" cy="347.3" rx="2.0" ry="2.0" fill="#b9dba0" opacity="0.34"/><ellipse cx="998.2" cy="187.6" rx="2.5" ry="1.6" fill="#b9dba0" opacity="0.48"/><ellipse cx="1062.4" cy="323.7" rx="2.6" ry="1.8" fill="#b9dba0" opacity="0.36"/><ellipse cx="977.9" cy="272.0" rx="2.3" ry="2.1" fill="#b9dba0" opacity="0.26"/><ellipse cx="959.6" cy="339.4" rx="0.8" ry="0.8" fill="#b9dba0" opacity="0.26"/><ellipse cx="1069.2" cy="149.5" rx="2.0" ry="1.2" fill="#b9dba0" opacity="0.54"/><ellipse cx="1100.1" cy="342.8" rx="1.0" ry="0.9" fill="#b9dba0" opacity="0.26"/><ellipse cx="1088.5" cy="313.6" rx="2.9" ry="1.9" fill="#b9dba0" opacity="0.35"/><ellipse cx="958.4" cy="156.5" rx="1.2" ry="0.9" fill="#b9dba0" opacity="0.40"/><ellipse cx="944.6" cy="191.5" rx="2.3" ry="1.7" fill="#b9dba0" opacity="0.36"/><ellipse cx="1048.6" cy="141.8" rx="2.1" ry="1.3" fill="#b9dba0" opacity="0.37"/><ellipse cx="1063.6" cy="253.3" rx="2.1" ry="2.0" fill="#b9dba0" opacity="0.54"/><ellipse cx="970.6" cy="135.3" rx="3.2" ry="1.8" fill="#b9dba0" opacity="0.25"/><ellipse cx="973.1" cy="243.8" rx="2.3" ry="1.9" fill="#b9dba0" opacity="0.58"/><ellipse cx="990.4" cy="182.2" rx="1.5" ry="1.4" fill="#b9dba0" opacity="0.47"/><ellipse cx="1077.9" cy="273.1" rx="1.6" ry="1.2" fill="#b9dba0" opacity="0.56"/><ellipse cx="956.0" cy="330.5" rx="1.1" ry="0.9" fill="#b9dba0" opacity="0.57"/><ellipse cx="981.6" cy="236.4" rx="2.9" ry="1.8" fill="#b9dba0" opacity="0.48"/><ellipse cx="1001.6" cy="206.9" rx="3.0" ry="1.9" fill="#b9dba0" opacity="0.51"/><ellipse cx="1041.8" cy="162.7" rx="2.4" ry="2.0" fill="#b9dba0" opacity="0.32"/><ellipse cx="967.9" cy="169.3" rx="1.6" ry="1.1" fill="#b9dba0" opacity="0.31"/><ellipse cx="1079.3" cy="296.3" rx="1.4" ry="0.9" fill="#b9dba0" opacity="0.29"/><ellipse cx="976.9" cy="220.4" rx="2.0" ry="1.2" fill="#b9dba0" opacity="0.49"/><ellipse cx="1028.1" cy="274.1" rx="1.2" ry="0.8" fill="#b9dba0" opacity="0.39"/><ellipse cx="1069.9" cy="334.8" rx="2.4" ry="1.5" fill="#b9dba0" opacity="0.40"/><ellipse cx="1059.2" cy="276.1" rx="1.7" ry="1.1" fill="#b9dba0" opacity="0.28"/><ellipse cx="1050.6" cy="190.0" rx="2.0" ry="1.3" fill="#b9dba0" opacity="0.39"/><ellipse cx="1058.5" cy="339.6" rx="2.7" ry="1.6" fill="#b9dba0" opacity="0.39"/><ellipse cx="1026.2" cy="349.4" rx="1.7" ry="1.5" fill="#b9dba0" opacity="0.52"/><ellipse cx="1104.7" cy="249.2" rx="2.2" ry="1.5" fill="#b9dba0" opacity="0.50"/><ellipse cx="977.6" cy="285.6" rx="2.0" ry="1.8" fill="#b9dba0" opacity="0.59"/><ellipse cx="1002.9" cy="147.5" rx="1.3" ry="1.2" fill="#b9dba0" opacity="0.40"/><ellipse cx="1014.2" cy="288.6" rx="1.2" ry="1.0" fill="#b9dba0" opacity="0.51"/><ellipse cx="1104.5" cy="251.0" rx="2.5" ry="1.9" fill="#b9dba0" opacity="0.32"/><ellipse cx="980.3" cy="347.1" rx="2.7" ry="1.6" fill="#b9dba0" opacity="0.54"/><ellipse cx="1022.4" cy="199.8" rx="1.3" ry="0.8" fill="#b9dba0" opacity="0.37"/><ellipse cx="1089.0" cy="193.8" rx="1.3" ry="1.0" fill="#b9dba0" opacity="0.32"/><ellipse cx="941.5" cy="293.8" rx="1.2" ry="1.0" fill="#b9dba0" opacity="0.42"/><ellipse cx="1051.2" cy="138.3" rx="3.2" ry="2.1" fill="#b9dba0" opacity="0.34"/><ellipse cx="958.7" cy="166.4" rx="2.4" ry="1.8" fill="#b9dba0" opacity="0.30"/><ellipse cx="1098.3" cy="309.2" rx="3.0" ry="2.0" fill="#b9dba0" opacity="0.52"/><ellipse cx="1087.0" cy="178.4" rx="2.3" ry="1.4" fill="#b9dba0" opacity="0.40"/><ellipse cx="1094.6" cy="257.1" rx="1.1" ry="1.0" fill="#b9dba0" opacity="0.42"/><ellipse cx="951.2" cy="237.8" rx="1.9" ry="1.4" fill="#b9dba0" opacity="0.44"/><ellipse cx="1087.3" cy="217.5" rx="2.3" ry="2.1" fill="#b9dba0" opacity="0.47"/><ellipse cx="1051.7" cy="141.3" rx="3.0" ry="1.7" fill="#b9dba0" opacity="0.37"/><ellipse cx="1111.8" cy="247.3" rx="2.1" ry="2.0" fill="#b9dba0" opacity="0.50"/><ellipse cx="1004.7" cy="239.4" rx="2.1" ry="1.8" fill="#b9dba0" opacity="0.40"/><ellipse cx="992.0" cy="317.1" rx="1.7" ry="1.4" fill="#b9dba0" opacity="0.43"/><ellipse cx="998.6" cy="204.8" rx="2.3" ry="1.5" fill="#b9dba0" opacity="0.52"/><ellipse cx="1035.9" cy="145.9" rx="0.7" ry="0.6" fill="#b9dba0" opacity="0.57"/><ellipse cx="1059.5" cy="181.8" rx="2.1" ry="1.3" fill="#b9dba0" opacity="0.29"/><ellipse cx="972.5" cy="143.1" rx="3.1" ry="2.1" fill="#b9dba0" opacity="0.38"/><ellipse cx="1084.1" cy="308.0" rx="1.3" ry="1.0" fill="#b9dba0" opacity="0.40"/><ellipse cx="996.4" cy="229.7" rx="2.2" ry="2.1" fill="#b9dba0" opacity="0.45"/><ellipse cx="947.9" cy="161.1" rx="2.6" ry="1.5" fill="#b9dba0" opacity="0.41"/><ellipse cx="943.5" cy="220.2" rx="3.7" ry="2.1" fill="#b9dba0" opacity="0.42"/><ellipse cx="1012.8" cy="157.4" rx="1.1" ry="0.9" fill="#b9dba0" opacity="0.26"/><ellipse cx="941.8" cy="285.4" rx="2.3" ry="2.1" fill="#b9dba0" opacity="0.55"/><ellipse cx="963.4" cy="138.9" rx="1.6" ry="1.0" fill="#b9dba0" opacity="0.32"/><ellipse cx="1089.9" cy="295.5" rx="2.5" ry="1.6" fill="#b9dba0" opacity="0.41"/><ellipse cx="1065.8" cy="137.5" rx="2.7" ry="1.6" fill="#b9dba0" opacity="0.28"/><ellipse cx="995.1" cy="295.5" rx="2.7" ry="2.0" fill="#b9dba0" opacity="0.27"/><ellipse cx="1005.0" cy="261.5" rx="1.9" ry="1.7" fill="#b9dba0" opacity="0.53"/><ellipse cx="1105.4" cy="307.6" rx="1.1" ry="1.1" fill="#b9dba0" opacity="0.59"/><ellipse cx="1063.4" cy="317.0" rx="2.8" ry="1.6" fill="#b9dba0" opacity="0.54"/><ellipse cx="1045.6" cy="202.9" rx="2.6" ry="2.0" fill="#b9dba0" opacity="0.49"/><ellipse cx="990.3" cy="135.4" rx="1.9" ry="1.3" fill="#b9dba0" opacity="0.54"/><ellipse cx="1082.2" cy="325.8" rx="1.7" ry="1.0" fill="#b9dba0" opacity="0.53"/><ellipse cx="1060.1" cy="336.0" rx="1.1" ry="0.7" fill="#b9dba0" opacity="0.53"/><ellipse cx="1022.0" cy="180.4" rx="2.9" ry="1.8" fill="#b9dba0" opacity="0.41"/><ellipse cx="1095.0" cy="249.8" rx="1.8" ry="1.5" fill="#b9dba0" opacity="0.32"/><ellipse cx="972.4" cy="289.2" rx="2.0" ry="1.5" fill="#b9dba0" opacity="0.43"/><ellipse cx="1006.1" cy="158.3" rx="2.1" ry="1.9" fill="#b9dba0" opacity="0.46"/><ellipse cx="1001.0" cy="249.3" rx="1.2" ry="0.7" fill="#b9dba0" opacity="0.55"/><ellipse cx="1025.6" cy="259.8" rx="2.5" ry="1.8" fill="#b9dba0" opacity="0.58"/><ellipse cx="985.2" cy="143.3" rx="0.9" ry="0.9" fill="#b9dba0" opacity="0.27"/><ellipse cx="1038.0" cy="326.5" rx="3.7" ry="2.1" fill="#b9dba0" opacity="0.27"/><ellipse cx="1045.1" cy="222.4" rx="2.6" ry="2.1" fill="#b9dba0" opacity="0.45"/><ellipse cx="1009.4" cy="233.6" rx="3.8" ry="2.1" fill="#b9dba0" opacity="0.33"/><ellipse cx="947.7" cy="191.3" rx="3.5" ry="2.0" fill="#b9dba0" opacity="0.54"/><ellipse cx="1053.5" cy="351.8" rx="1.3" ry="0.8" fill="#b9dba0" opacity="0.58"/><ellipse cx="1072.9" cy="158.2" rx="1.1" ry="1.0" fill="#b9dba0" opacity="0.42"/><ellipse cx="970.3" cy="187.5" rx="1.7" ry="1.7" fill="#b9dba0" opacity="0.50"/><ellipse cx="974.9" cy="142.9" rx="1.7" ry="1.0" fill="#b9dba0" opacity="0.55"/><ellipse cx="1095.6" cy="165.7" rx="1.3" ry="0.8" fill="#b9dba0" opacity="0.54"/><ellipse cx="1050.3" cy="234.5" rx="2.6" ry="1.9" fill="#b9dba0" opacity="0.47"/><ellipse cx="965.8" cy="183.8" rx="2.5" ry="1.7" fill="#b9dba0" opacity="0.30"/><ellipse cx="1092.5" cy="193.6" rx="1.0" ry="0.8" fill="#b9dba0" opacity="0.54"/><ellipse cx="999.2" cy="171.9" rx="1.9" ry="1.1" fill="#b9dba0" opacity="0.29"/><ellipse cx="1057.3" cy="181.5" rx="1.3" ry="1.1" fill="#b9dba0" opacity="0.32"/><ellipse cx="1102.0" cy="156.5" rx="2.1" ry="2.0" fill="#b9dba0" opacity="0.50"/><ellipse cx="992.1" cy="350.3" rx="2.4" ry="1.9" fill="#b9dba0" opacity="0.30"/><ellipse cx="941.3" cy="318.1" rx="1.2" ry="0.9" fill="#b9dba0" opacity="0.57"/><ellipse cx="979.0" cy="260.7" rx="1.4" ry="0.9" fill="#b9dba0" opacity="0.50"/><ellipse cx="975.2" cy="152.4" rx="2.2" ry="1.6" fill="#b9dba0" opacity="0.35"/><ellipse cx="1082.2" cy="263.2" rx="1.1" ry="0.7" fill="#b9dba0" opacity="0.39"/><ellipse cx="1023.9" cy="326.8" rx="1.5" ry="0.9" fill="#b9dba0" opacity="0.38"/><ellipse cx="969.4" cy="216.7" rx="0.9" ry="0.6" fill="#b9dba0" opacity="0.41"/><ellipse cx="1030.7" cy="161.6" rx="3.2" ry="1.9" fill="#b9dba0" opacity="0.36"/><ellipse cx="1027.1" cy="247.9" rx="1.5" ry="1.5" fill="#b9dba0" opacity="0.59"/><ellipse cx="979.9" cy="175.1" rx="1.7" ry="1.0" fill="#b9dba0" opacity="0.26"/><ellipse cx="957.8" cy="288.8" rx="0.9" ry="0.6" fill="#b9dba0" opacity="0.45"/><ellipse cx="1032.0" cy="289.6" rx="3.1" ry="2.0" fill="#b9dba0" opacity="0.27"/><ellipse cx="962.4" cy="243.6" rx="1.1" ry="1.0" fill="#b9dba0" opacity="0.39"/><ellipse cx="1076.2" cy="209.5" rx="1.5" ry="1.1" fill="#b9dba0" opacity="0.59"/><ellipse cx="1088.5" cy="146.8" rx="3.7" ry="2.1" fill="#b9dba0" opacity="0.34"/><ellipse cx="1014.5" cy="274.2" rx="1.5" ry="1.4" fill="#b9dba0" opacity="0.40"/><ellipse cx="1028.8" cy="139.6" rx="3.5" ry="2.2" fill="#b9dba0" opacity="0.58"/><ellipse cx="1094.9" cy="142.6" rx="1.6" ry="1.0" fill="#b9dba0" opacity="0.35"/><ellipse cx="1035.4" cy="338.4" rx="1.4" ry="1.0" fill="#b9dba0" opacity="0.40"/><ellipse cx="1106.5" cy="198.3" rx="1.8" ry="1.6" fill="#b9dba0" opacity="0.46"/><ellipse cx="1107.4" cy="248.0" rx="1.9" ry="1.3" fill="#b9dba0" opacity="0.30"/><ellipse cx="962.6" cy="163.9" rx="1.5" ry="1.3" fill="#b9dba0" opacity="0.34"/><ellipse cx="976.0" cy="291.3" rx="2.2" ry="1.5" fill="#b9dba0" opacity="0.41"/><ellipse cx="995.0" cy="188.3" rx="1.9" ry="1.4" fill="#b9dba0" opacity="0.45"/><ellipse cx="982.5" cy="257.5" rx="1.9" ry="1.1" fill="#b9dba0" opacity="0.35"/><ellipse cx="1075.4" cy="169.9" rx="2.7" ry="2.0" fill="#b9dba0" opacity="0.27"/><ellipse cx="1069.5" cy="169.0" rx="1.8" ry="1.2" fill="#b9dba0" opacity="0.47"/><ellipse cx="1088.9" cy="315.7" rx="2.8" ry="1.8" fill="#b9dba0" opacity="0.52"/><ellipse cx="941.8" cy="303.4" rx="2.5" ry="1.4" fill="#b9dba0" opacity="0.45"/><ellipse cx="1046.7" cy="218.5" rx="2.1" ry="1.3" fill="#b9dba0" opacity="0.35"/><ellipse cx="1009.0" cy="257.2" rx="1.8" ry="1.1" fill="#b9dba0" opacity="0.55"/><ellipse cx="1027.9" cy="232.7" rx="1.2" ry="1.1" fill="#b9dba0" opacity="0.45"/><ellipse cx="1107.8" cy="179.9" rx="2.1" ry="2.1" fill="#b9dba0" opacity="0.27"/><ellipse cx="1032.4" cy="156.8" rx="1.8" ry="1.2" fill="#b9dba0" opacity="0.45"/><ellipse cx="1094.1" cy="347.2" rx="2.0" ry="1.3" fill="#b9dba0" opacity="0.60"/><ellipse cx="1084.7" cy="247.8" rx="3.2" ry="2.0" fill="#b9dba0" opacity="0.54"/><ellipse cx="1113.3" cy="330.4" rx="1.0" ry="0.9" fill="#b9dba0" opacity="0.43"/><ellipse cx="1028.9" cy="176.4" rx="2.4" ry="1.6" fill="#b9dba0" opacity="0.37"/><ellipse cx="1113.9" cy="275.0" rx="2.1" ry="1.3" fill="#b9dba0" opacity="0.36"/><ellipse cx="1061.2" cy="135.9" rx="2.9" ry="1.9" fill="#b9dba0" opacity="0.48"/><ellipse cx="975.2" cy="244.5" rx="1.6" ry="1.0" fill="#b9dba0" opacity="0.44"/><ellipse cx="1114.5" cy="261.4" rx="0.9" ry="0.8" fill="#b9dba0" opacity="0.52"/><ellipse cx="959.6" cy="157.0" rx="2.4" ry="1.4" fill="#b9dba0" opacity="0.46"/><ellipse cx="1081.3" cy="148.7" rx="2.3" ry="1.8" fill="#b9dba0" opacity="0.50"/><ellipse cx="1002.6" cy="172.3" rx="1.3" ry="0.8" fill="#b9dba0" opacity="0.45"/><ellipse cx="1001.7" cy="234.0" rx="1.2" ry="0.7" fill="#b9dba0" opacity="0.45"/><ellipse cx="984.4" cy="144.7" rx="2.5" ry="2.0" fill="#b9dba0" opacity="0.56"/><ellipse cx="1025.3" cy="309.4" rx="1.1" ry="0.9" fill="#b9dba0" opacity="0.32"/><ellipse cx="1110.0" cy="199.0" rx="1.1" ry="0.8" fill="#b9dba0" opacity="0.38"/><ellipse cx="1011.2" cy="149.4" rx="2.5" ry="1.9" fill="#b9dba0" opacity="0.34"/><ellipse cx="974.3" cy="197.4" rx="1.0" ry="0.7" fill="#b9dba0" opacity="0.37"/><ellipse cx="968.1" cy="290.3" rx="1.7" ry="1.0" fill="#b9dba0" opacity="0.29"/><ellipse cx="1006.6" cy="345.8" rx="3.0" ry="2.1" fill="#b9dba0" opacity="0.33"/><ellipse cx="1019.8" cy="163.8" rx="1.7" ry="1.0" fill="#b9dba0" opacity="0.46"/><ellipse cx="1005.0" cy="189.2" rx="1.6" ry="0.9" fill="#b9dba0" opacity="0.29"/><ellipse cx="1030.3" cy="254.4" rx="2.4" ry="1.8" fill="#b9dba0" opacity="0.48"/><ellipse cx="1039.8" cy="203.4" rx="0.8" ry="0.7" fill="#b9dba0" opacity="0.55"/><ellipse cx="996.9" cy="280.8" rx="1.9" ry="1.5" fill="#b9dba0" opacity="0.43"/><ellipse cx="992.7" cy="149.5" rx="1.1" ry="1.0" fill="#b9dba0" opacity="0.50"/><ellipse cx="964.0" cy="195.8" rx="2.6" ry="1.7" fill="#b9dba0" opacity="0.37"/><ellipse cx="984.2" cy="321.3" rx="1.8" ry="1.6" fill="#b9dba0" opacity="0.29"/><ellipse cx="948.0" cy="143.8" rx="1.1" ry="0.9" fill="#b9dba0" opacity="0.38"/><ellipse cx="947.8" cy="203.4" rx="1.5" ry="0.9" fill="#b9dba0" opacity="0.45"/><ellipse cx="1065.7" cy="191.0" rx="2.2" ry="1.7" fill="#b9dba0" opacity="0.25"/><ellipse cx="1086.2" cy="305.8" rx="1.1" ry="0.7" fill="#b9dba0" opacity="0.46"/><ellipse cx="949.2" cy="188.8" rx="2.2" ry="1.9" fill="#b9dba0" opacity="0.57"/><ellipse cx="1071.4" cy="154.0" rx="2.0" ry="1.2" fill="#b9dba0" opacity="0.54"/><ellipse cx="989.9" cy="154.8" rx="2.2" ry="1.3" fill="#b9dba0" opacity="0.49"/><ellipse cx="1069.5" cy="317.6" rx="1.4" ry="1.3" fill="#b9dba0" opacity="0.49"/><ellipse cx="963.2" cy="302.6" rx="2.8" ry="1.7" fill="#b9dba0" opacity="0.34"/><ellipse cx="1036.1" cy="348.3" rx="1.8" ry="1.5" fill="#b9dba0" opacity="0.27"/><ellipse cx="1003.3" cy="225.6" rx="1.2" ry="1.1" fill="#b9dba0" opacity="0.50"/><ellipse cx="1057.6" cy="187.3" rx="1.9" ry="1.4" fill="#b9dba0" opacity="0.58"/><ellipse cx="965.7" cy="258.9" rx="2.7" ry="1.9" fill="#b9dba0" opacity="0.52"/><ellipse cx="960.9" cy="198.7" rx="1.0" ry="0.9" fill="#b9dba0" opacity="0.35"/><ellipse cx="975.3" cy="289.4" rx="1.0" ry="0.8" fill="#b9dba0" opacity="0.41"/><ellipse cx="1004.2" cy="172.0" rx="1.1" ry="0.6" fill="#b9dba0" opacity="0.51"/><ellipse cx="1039.1" cy="158.9" rx="1.5" ry="1.3" fill="#b9dba0" opacity="0.44"/><ellipse cx="942.4" cy="337.3" rx="2.8" ry="1.6" fill="#b9dba0" opacity="0.48"/><ellipse cx="984.7" cy="189.1" rx="1.0" ry="0.6" fill="#b9dba0" opacity="0.54"/><ellipse cx="992.6" cy="175.9" rx="3.4" ry="2.0" fill="#b9dba0" opacity="0.31"/><ellipse cx="997.8" cy="175.6" rx="1.4" ry="1.1" fill="#b9dba0" opacity="0.44"/><ellipse cx="1005.3" cy="317.9" rx="1.0" ry="0.7" fill="#b9dba0" opacity="0.47"/><ellipse cx="1105.4" cy="243.8" rx="1.1" ry="0.9" fill="#b9dba0" opacity="0.45"/><ellipse cx="955.0" cy="286.4" rx="2.3" ry="1.3" fill="#b9dba0" opacity="0.28"/><ellipse cx="948.0" cy="231.7" rx="1.8" ry="1.8" fill="#b9dba0" opacity="0.54"/><ellipse cx="1089.8" cy="308.1" rx="1.6" ry="1.1" fill="#b9dba0" opacity="0.43"/><ellipse cx="1014.3" cy="209.5" rx="2.8" ry="1.7" fill="#b9dba0" opacity="0.57"/><ellipse cx="969.6" cy="200.1" rx="1.9" ry="1.5" fill="#b9dba0" opacity="0.32"/><ellipse cx="955.8" cy="206.2" rx="3.7" ry="2.2" fill="#b9dba0" opacity="0.55"/><ellipse cx="1110.5" cy="346.6" rx="2.0" ry="1.9" fill="#b9dba0" opacity="0.49"/><ellipse cx="945.8" cy="176.5" rx="1.4" ry="1.3" fill="#b9dba0" opacity="0.48"/><ellipse cx="1005.7" cy="262.8" rx="2.1" ry="1.4" fill="#b9dba0" opacity="0.39"/><ellipse cx="960.9" cy="174.7" rx="1.6" ry="1.5" fill="#b9dba0" opacity="0.55"/><ellipse cx="985.1" cy="155.9" rx="1.4" ry="1.0" fill="#b9dba0" opacity="0.44"/><ellipse cx="980.4" cy="261.0" rx="2.1" ry="1.4" fill="#b9dba0" opacity="0.28"/><ellipse cx="1012.0" cy="151.2" rx="2.9" ry="2.0" fill="#b9dba0" opacity="0.50"/><ellipse cx="1039.0" cy="305.5" rx="1.9" ry="1.8" fill="#b9dba0" opacity="0.33"/><ellipse cx="1005.8" cy="138.3" rx="1.2" ry="0.9" fill="#b9dba0" opacity="0.50"/><ellipse cx="1015.1" cy="330.5" rx="2.9" ry="2.0" fill="#b9dba0" opacity="0.57"/><ellipse cx="1092.5" cy="172.0" rx="1.8" ry="1.1" fill="#b9dba0" opacity="0.49"/><ellipse cx="1084.7" cy="162.0" rx="3.1" ry="1.8" fill="#b9dba0" opacity="0.50"/><ellipse cx="948.6" cy="267.8" rx="2.4" ry="1.5" fill="#b9dba0" opacity="0.29"/><ellipse cx="1102.0" cy="283.5" rx="1.2" ry="0.9" fill="#b9dba0" opacity="0.54"/><ellipse cx="1042.2" cy="160.0" rx="1.3" ry="0.8" fill="#b9dba0" opacity="0.31"/><ellipse cx="1037.4" cy="198.8" rx="1.3" ry="1.2" fill="#b9dba0" opacity="0.56"/><ellipse cx="1106.1" cy="138.0" rx="1.2" ry="0.8" fill="#b9dba0" opacity="0.56"/><ellipse cx="1080.3" cy="142.8" rx="2.9" ry="1.9" fill="#b9dba0" opacity="0.39"/><ellipse cx="1009.5" cy="327.1" rx="0.9" ry="0.7" fill="#b9dba0" opacity="0.33"/><ellipse cx="1096.6" cy="264.6" rx="1.1" ry="0.9" fill="#b9dba0" opacity="0.41"/><ellipse cx="1041.4" cy="220.3" rx="0.9" ry="0.6" fill="#b9dba0" opacity="0.37"/><ellipse cx="948.9" cy="167.1" rx="1.3" ry="1.0" fill="#b9dba0" opacity="0.43"/><ellipse cx="986.6" cy="260.2" rx="3.8" ry="2.1" fill="#b9dba0" opacity="0.26"/><ellipse cx="1004.1" cy="196.9" rx="3.5" ry="2.0" fill="#b9dba0" opacity="0.49"/><ellipse cx="1029.5" cy="274.7" rx="2.0" ry="1.5" fill="#b9dba0" opacity="0.27"/><ellipse cx="1024.8" cy="215.8" rx="1.2" ry="1.0" fill="#b9dba0" opacity="0.30"/><ellipse cx="942.3" cy="326.6" rx="1.9" ry="1.3" fill="#b9dba0" opacity="0.36"/><ellipse cx="970.4" cy="149.6" rx="1.7" ry="1.1" fill="#b9dba0" opacity="0.44"/><ellipse cx="1042.5" cy="152.6" rx="2.7" ry="1.5" fill="#b9dba0" opacity="0.37"/><ellipse cx="989.0" cy="191.7" rx="1.0" ry="0.9" fill="#b9dba0" opacity="0.50"/><ellipse cx="979.0" cy="222.9" rx="2.6" ry="1.6" fill="#b9dba0" opacity="0.48"/><ellipse cx="1093.3" cy="210.1" rx="1.3" ry="0.9" fill="#b9dba0" opacity="0.56"/><ellipse cx="1052.3" cy="338.0" rx="1.8" ry="1.1" fill="#b9dba0" opacity="0.48"/><ellipse cx="1011.5" cy="284.4" rx="0.9" ry="0.7" fill="#b9dba0" opacity="0.27"/><ellipse cx="1050.0" cy="208.6" rx="1.9" ry="1.6" fill="#b9dba0" opacity="0.41"/><ellipse cx="943.4" cy="338.6" rx="2.3" ry="2.2" fill="#b9dba0" opacity="0.46"/><ellipse cx="1067.0" cy="207.4" rx="0.9" ry="0.8" fill="#b9dba0" opacity="0.52"/><ellipse cx="956.6" cy="314.1" rx="2.2" ry="1.5" fill="#b9dba0" opacity="0.44"/><ellipse cx="1055.4" cy="267.3" rx="2.2" ry="1.8" fill="#b9dba0" opacity="0.50"/><ellipse cx="1073.8" cy="305.7" rx="3.3" ry="1.8" fill="#b9dba0" opacity="0.41"/><ellipse cx="963.9" cy="137.0" rx="2.7" ry="1.6" fill="#b9dba0" opacity="0.38"/><ellipse cx="1113.2" cy="185.2" rx="0.8" ry="0.7" fill="#b9dba0" opacity="0.30"/><ellipse cx="951.5" cy="245.4" rx="1.6" ry="0.9" fill="#b9dba0" opacity="0.38"/><ellipse cx="967.0" cy="174.0" rx="2.3" ry="2.1" fill="#b9dba0" opacity="0.26"/><ellipse cx="1027.8" cy="274.9" rx="2.6" ry="1.9" fill="#b9dba0" opacity="0.36"/><ellipse cx="1098.2" cy="158.7" rx="1.1" ry="0.7" fill="#b9dba0" opacity="0.39"/><ellipse cx="1091.3" cy="148.2" rx="2.2" ry="1.3" fill="#b9dba0" opacity="0.58"/><ellipse cx="1050.1" cy="184.3" rx="1.4" ry="1.0" fill="#b9dba0" opacity="0.33"/><ellipse cx="976.4" cy="302.0" rx="1.9" ry="1.1" fill="#b9dba0" opacity="0.33"/><ellipse cx="1092.3" cy="193.8" rx="2.3" ry="1.9" fill="#b9dba0" opacity="0.37"/><ellipse cx="1025.5" cy="331.0" rx="2.5" ry="1.7" fill="#b9dba0" opacity="0.41"/><ellipse cx="1041.8" cy="329.2" rx="2.6" ry="2.0" fill="#b9dba0" opacity="0.52"/><ellipse cx="1114.1" cy="200.5" rx="1.4" ry="0.8" fill="#b9dba0" opacity="0.25"/><ellipse cx="1099.6" cy="168.2" rx="0.9" ry="0.8" fill="#b9dba0" opacity="0.49"/><ellipse cx="946.7" cy="186.6" rx="1.8" ry="1.7" fill="#b9dba0" opacity="0.43"/><ellipse cx="981.3" cy="229.7" rx="1.1" ry="0.6" fill="#b9dba0" opacity="0.36"/><ellipse cx="1093.9" cy="161.5" rx="1.1" ry="0.8" fill="#b9dba0" opacity="0.31"/><ellipse cx="1060.3" cy="167.5" rx="1.5" ry="1.4" fill="#b9dba0" opacity="0.37"/><ellipse cx="1027.4" cy="337.1" rx="1.7" ry="0.9" fill="#b9dba0" opacity="0.56"/><ellipse cx="1068.3" cy="195.1" rx="1.1" ry="1.0" fill="#b9dba0" opacity="0.27"/><ellipse cx="1004.1" cy="137.3" rx="2.4" ry="1.6" fill="#b9dba0" opacity="0.44"/><ellipse cx="1065.9" cy="222.8" rx="2.3" ry="1.3" fill="#b9dba0" opacity="0.39"/><ellipse cx="1008.1" cy="225.2" rx="2.2" ry="2.2" fill="#b9dba0" opacity="0.46"/><ellipse cx="1102.2" cy="191.0" rx="1.4" ry="1.2" fill="#b9dba0" opacity="0.32"/><ellipse cx="1099.1" cy="145.9" rx="1.7" ry="1.1" fill="#b9dba0" opacity="0.44"/><ellipse cx="995.9" cy="348.8" rx="3.0" ry="1.8" fill="#b9dba0" opacity="0.43"/><ellipse cx="1044.1" cy="353.8" rx="2.6" ry="1.6" fill="#b9dba0" opacity="0.38"/><ellipse cx="1064.9" cy="221.6" rx="2.4" ry="1.6" fill="#b9dba0" opacity="0.36"/><ellipse cx="1050.4" cy="254.5" rx="1.9" ry="1.6" fill="#b9dba0" opacity="0.57"/><ellipse cx="1023.4" cy="293.7" rx="1.6" ry="1.4" fill="#b9dba0" opacity="0.30"/><ellipse cx="1102.4" cy="251.3" rx="2.4" ry="1.4" fill="#b9dba0" opacity="0.33"/><ellipse cx="971.0" cy="315.8" rx="2.7" ry="1.6" fill="#b9dba0" opacity="0.56"/><ellipse cx="1092.0" cy="144.5" rx="3.2" ry="1.9" fill="#b9dba0" opacity="0.29"/><ellipse cx="967.8" cy="190.3" rx="1.9" ry="1.2" fill="#b9dba0" opacity="0.43"/><ellipse cx="1019.8" cy="154.4" rx="3.4" ry="2.2" fill="#b9dba0" opacity="0.41"/><ellipse cx="967.1" cy="284.6" rx="1.7" ry="1.4" fill="#b9dba0" opacity="0.38"/><ellipse cx="1000.2" cy="218.8" rx="1.3" ry="0.9" fill="#b9dba0" opacity="0.27"/><ellipse cx="972.0" cy="293.0" rx="1.3" ry="1.1" fill="#b9dba0" opacity="0.54"/><ellipse cx="1048.5" cy="216.8" rx="1.7" ry="1.3" fill="#b9dba0" opacity="0.50"/><ellipse cx="992.4" cy="224.7" rx="2.4" ry="1.9" fill="#b9dba0" opacity="0.38"/><ellipse cx="1041.7" cy="338.5" rx="3.4" ry="2.2" fill="#b9dba0" opacity="0.38"/><ellipse cx="1056.8" cy="207.5" rx="2.4" ry="1.8" fill="#b9dba0" opacity="0.43"/><ellipse cx="945.5" cy="265.4" rx="2.2" ry="1.3" fill="#b9dba0" opacity="0.40"/><ellipse cx="1023.4" cy="330.9" rx="2.0" ry="1.4" fill="#b9dba0" opacity="0.54"/><ellipse cx="1057.6" cy="297.9" rx="1.0" ry="0.7" fill="#b9dba0" opacity="0.44"/><ellipse cx="1074.8" cy="304.4" rx="1.0" ry="1.0" fill="#b9dba0" opacity="0.54"/><ellipse cx="958.7" cy="154.4" rx="1.6" ry="1.5" fill="#b9dba0" opacity="0.49"/><ellipse cx="1064.7" cy="241.2" rx="2.3" ry="1.7" fill="#b9dba0" opacity="0.45"/><ellipse cx="966.3" cy="208.6" rx="1.1" ry="0.6" fill="#b9dba0" opacity="0.35"/><ellipse cx="986.6" cy="203.9" rx="2.9" ry="2.0" fill="#b9dba0" opacity="0.43"/><ellipse cx="1014.1" cy="146.3" rx="3.3" ry="2.0" fill="#b9dba0" opacity="0.55"/><ellipse cx="985.7" cy="179.4" rx="1.9" ry="1.5" fill="#b9dba0" opacity="0.41"/><ellipse cx="1026.1" cy="263.4" rx="2.2" ry="1.9" fill="#b9dba0" opacity="0.57"/><ellipse cx="1037.8" cy="146.3" rx="1.9" ry="1.5" fill="#b9dba0" opacity="0.45"/><ellipse cx="997.3" cy="195.2" rx="1.7" ry="1.1" fill="#b9dba0" opacity="0.53"/><ellipse cx="1018.4" cy="328.2" rx="2.0" ry="1.3" fill="#b9dba0" opacity="0.27"/><ellipse cx="1091.1" cy="150.8" rx="1.5" ry="0.9" fill="#b9dba0" opacity="0.45"/><ellipse cx="1058.4" cy="199.9" rx="2.2" ry="1.9" fill="#b9dba0" opacity="0.57"/><ellipse cx="977.0" cy="157.2" rx="3.3" ry="1.9" fill="#b9dba0" opacity="0.40"/><ellipse cx="1060.3" cy="169.1" rx="1.8" ry="1.7" fill="#b9dba0" opacity="0.54"/><ellipse cx="992.1" cy="186.2" rx="1.6" ry="1.1" fill="#b9dba0" opacity="0.30"/><ellipse cx="1009.1" cy="142.2" rx="1.9" ry="1.6" fill="#b9dba0" opacity="0.44"/><ellipse cx="1015.8" cy="284.4" rx="2.1" ry="1.9" fill="#b9dba0" opacity="0.57"/><ellipse cx="1114.3" cy="341.7" rx="1.4" ry="1.1" fill="#b9dba0" opacity="0.51"/><ellipse cx="1027.4" cy="339.6" rx="2.3" ry="1.4" fill="#b9dba0" opacity="0.46"/><ellipse cx="1035.1" cy="154.5" rx="1.8" ry="1.0" fill="#b9dba0" opacity="0.55"/><ellipse cx="980.5" cy="338.4" rx="2.8" ry="1.6" fill="#b9dba0" opacity="0.37"/><ellipse cx="1105.3" cy="279.4" rx="1.5" ry="1.1" fill="#b9dba0" opacity="0.34"/><ellipse cx="1070.2" cy="174.3" rx="1.1" ry="1.1" fill="#b9dba0" opacity="0.45"/><ellipse cx="1044.6" cy="236.5" rx="1.5" ry="1.4" fill="#b9dba0" opacity="0.48"/><ellipse cx="964.0" cy="262.2" rx="1.8" ry="1.2" fill="#b9dba0" opacity="0.31"/><ellipse cx="970.5" cy="342.1" rx="3.3" ry="1.9" fill="#b9dba0" opacity="0.42"/><ellipse cx="966.9" cy="155.7" rx="1.1" ry="0.8" fill="#b9dba0" opacity="0.44"/><ellipse cx="961.5" cy="237.9" rx="2.0" ry="1.5" fill="#b9dba0" opacity="0.38"/><ellipse cx="975.4" cy="223.8" rx="1.0" ry="0.8" fill="#b9dba0" opacity="0.56"/><ellipse cx="1028.3" cy="330.9" rx="2.9" ry="2.1" fill="#b9dba0" opacity="0.53"/><ellipse cx="1040.3" cy="286.6" rx="2.0" ry="1.8" fill="#b9dba0" opacity="0.34"/><ellipse cx="946.4" cy="221.5" rx="1.8" ry="1.1" fill="#b9dba0" opacity="0.28"/><ellipse cx="1041.7" cy="186.5" rx="2.9" ry="1.9" fill="#b9dba0" opacity="0.27"/><ellipse cx="1021.4" cy="337.6" rx="2.8" ry="2.1" fill="#b9dba0" opacity="0.39"/><ellipse cx="956.3" cy="188.9" rx="1.9" ry="1.7" fill="#b9dba0" opacity="0.37"/><ellipse cx="965.4" cy="178.6" rx="2.0" ry="1.1" fill="#b9dba0" opacity="0.60"/><ellipse cx="1078.7" cy="240.5" rx="3.2" ry="1.8" fill="#b9dba0" opacity="0.51"/><ellipse cx="1051.7" cy="178.8" rx="3.2" ry="2.0" fill="#b9dba0" opacity="0.28"/><ellipse cx="1065.8" cy="211.8" rx="3.3" ry="2.1" fill="#b9dba0" opacity="0.51"/><ellipse cx="1080.6" cy="264.9" rx="3.1" ry="1.9" fill="#b9dba0" opacity="0.55"/><ellipse cx="993.0" cy="346.4" rx="2.3" ry="2.1" fill="#b9dba0" opacity="0.59"/><ellipse cx="981.4" cy="178.6" rx="1.4" ry="1.0" fill="#b9dba0" opacity="0.57"/><ellipse cx="1060.2" cy="291.3" rx="3.0" ry="1.9" fill="#b9dba0" opacity="0.49"/><ellipse cx="1104.9" cy="316.7" rx="1.1" ry="0.7" fill="#b9dba0" opacity="0.54"/><ellipse cx="1079.0" cy="136.0" rx="0.7" ry="0.6" fill="#b9dba0" opacity="0.53"/><ellipse cx="1013.8" cy="268.0" rx="1.3" ry="1.1" fill="#b9dba0" opacity="0.37"/><ellipse cx="1087.9" cy="271.2" rx="0.9" ry="0.7" fill="#b9dba0" opacity="0.50"/><ellipse cx="962.0" cy="285.2" rx="2.2" ry="1.9" fill="#b9dba0" opacity="0.35"/><ellipse cx="1107.6" cy="214.7" rx="3.0" ry="2.0" fill="#b9dba0" opacity="0.56"/><ellipse cx="1029.2" cy="352.5" rx="2.2" ry="1.9" fill="#b9dba0" opacity="0.43"/><ellipse cx="941.1" cy="173.6" rx="2.2" ry="1.3" fill="#b9dba0" opacity="0.34"/><ellipse cx="1002.3" cy="157.2" rx="2.8" ry="2.0" fill="#b9dba0" opacity="0.38"/><ellipse cx="954.2" cy="272.3" rx="2.7" ry="2.1" fill="#b9dba0" opacity="0.48"/><ellipse cx="1051.0" cy="217.7" rx="2.9" ry="1.7" fill="#b9dba0" opacity="0.42"/><ellipse cx="1004.3" cy="349.8" rx="3.0" ry="1.9" fill="#b9dba0" opacity="0.45"/><ellipse cx="1067.8" cy="300.0" rx="1.2" ry="1.1" fill="#b9dba0" opacity="0.58"/><ellipse cx="1096.1" cy="166.8" rx="1.6" ry="1.5" fill="#b9dba0" opacity="0.39"/><ellipse cx="1071.0" cy="276.1" rx="2.2" ry="1.8" fill="#b9dba0" opacity="0.44"/><ellipse cx="1014.2" cy="350.2" rx="2.9" ry="1.9" fill="#b9dba0" opacity="0.38"/><ellipse cx="989.3" cy="170.6" rx="3.1" ry="1.9" fill="#b9dba0" opacity="0.37"/><ellipse cx="969.2" cy="297.4" rx="1.1" ry="1.1" fill="#b9dba0" opacity="0.35"/><ellipse cx="975.3" cy="205.6" rx="0.9" ry="0.8" fill="#b9dba0" opacity="0.39"/><ellipse cx="1008.1" cy="347.0" rx="1.6" ry="0.9" fill="#b9dba0" opacity="0.41"/><ellipse cx="995.8" cy="168.5" rx="2.0" ry="1.4" fill="#b9dba0" opacity="0.48"/><ellipse cx="1072.0" cy="195.6" rx="2.9" ry="2.1" fill="#b9dba0" opacity="0.35"/><ellipse cx="1050.7" cy="192.1" rx="1.1" ry="0.7" fill="#b9dba0" opacity="0.45"/><ellipse cx="1002.5" cy="341.8" rx="1.0" ry="1.0" fill="#b9dba0" opacity="0.44"/><ellipse cx="1072.1" cy="284.2" rx="2.1" ry="1.9" fill="#b9dba0" opacity="0.36"/><ellipse cx="1053.2" cy="347.8" rx="2.8" ry="1.7" fill="#b9dba0" opacity="0.39"/><ellipse cx="1104.6" cy="298.3" rx="2.0" ry="1.2" fill="#b9dba0" opacity="0.37"/><ellipse cx="973.3" cy="326.8" rx="2.2" ry="1.4" fill="#b9dba0" opacity="0.57"/><ellipse cx="964.2" cy="209.5" rx="1.8" ry="1.3" fill="#b9dba0" opacity="0.55"/><ellipse cx="1057.2" cy="262.1" rx="1.9" ry="1.5" fill="#b9dba0" opacity="0.55"/><ellipse cx="1078.2" cy="319.4" rx="2.7" ry="1.7" fill="#b9dba0" opacity="0.43"/><ellipse cx="1047.5" cy="195.5" rx="2.6" ry="1.6" fill="#b9dba0" opacity="0.35"/><ellipse cx="978.1" cy="184.3" rx="3.0" ry="1.7" fill="#b9dba0" opacity="0.53"/><ellipse cx="1003.6" cy="288.9" rx="2.4" ry="1.9" fill="#b9dba0" opacity="0.25"/><ellipse cx="1050.5" cy="165.5" rx="0.9" ry="0.7" fill="#b9dba0" opacity="0.44"/><ellipse cx="960.2" cy="184.4" rx="1.4" ry="1.1" fill="#b9dba0" opacity="0.45"/><ellipse cx="978.9" cy="309.6" rx="3.2" ry="1.9" fill="#b9dba0" opacity="0.44"/><ellipse cx="946.3" cy="306.2" rx="1.9" ry="1.4" fill="#b9dba0" opacity="0.27"/><ellipse cx="1080.9" cy="346.5" rx="2.3" ry="2.2" fill="#b9dba0" opacity="0.42"/><ellipse cx="964.3" cy="234.9" rx="2.4" ry="1.7" fill="#b9dba0" opacity="0.37"/><ellipse cx="974.0" cy="223.6" rx="1.4" ry="0.9" fill="#b9dba0" opacity="0.43"/><ellipse cx="1017.3" cy="178.5" rx="1.1" ry="0.9" fill="#b9dba0" opacity="0.45"/><ellipse cx="1066.2" cy="148.8" rx="1.0" ry="0.6" fill="#b9dba0" opacity="0.50"/><ellipse cx="1050.7" cy="193.0" rx="1.3" ry="0.9" fill="#b9dba0" opacity="0.60"/><ellipse cx="994.2" cy="144.7" rx="2.0" ry="1.2" fill="#b9dba0" opacity="0.53"/><ellipse cx="1020.2" cy="157.5" rx="1.4" ry="0.8" fill="#b9dba0" opacity="0.41"/><ellipse cx="1023.9" cy="315.8" rx="1.1" ry="0.8" fill="#b9dba0" opacity="0.43"/><ellipse cx="977.4" cy="190.4" rx="3.2" ry="2.1" fill="#b9dba0" opacity="0.58"/><ellipse cx="964.3" cy="137.8" rx="2.0" ry="1.5" fill="#b9dba0" opacity="0.25"/><ellipse cx="1085.5" cy="307.9" rx="1.1" ry="0.7" fill="#b9dba0" opacity="0.44"/><ellipse cx="953.4" cy="206.1" rx="2.8" ry="2.0" fill="#b9dba0" opacity="0.47"/><ellipse cx="976.8" cy="188.6" rx="1.3" ry="1.2" fill="#b9dba0" opacity="0.46"/><ellipse cx="963.0" cy="179.0" rx="2.3" ry="1.5" fill="#b9dba0" opacity="0.50"/><ellipse cx="1017.5" cy="149.9" rx="0.9" ry="0.7" fill="#b9dba0" opacity="0.39"/><ellipse cx="1058.1" cy="292.0" rx="2.5" ry="1.6" fill="#b9dba0" opacity="0.42"/><ellipse cx="965.7" cy="335.0" rx="0.8" ry="0.7" fill="#b9dba0" opacity="0.60"/><ellipse cx="1080.7" cy="143.4" rx="1.7" ry="1.0" fill="#b9dba0" opacity="0.33"/><ellipse cx="1057.9" cy="339.7" rx="2.5" ry="2.1" fill="#b9dba0" opacity="0.30"/><ellipse cx="944.2" cy="301.6" rx="3.4" ry="2.2" fill="#b9dba0" opacity="0.32"/><ellipse cx="1081.4" cy="170.8" rx="1.3" ry="0.8" fill="#b9dba0" opacity="0.56"/><ellipse cx="1037.7" cy="315.7" rx="2.3" ry="1.6" fill="#b9dba0" opacity="0.53"/><ellipse cx="954.5" cy="146.9" rx="1.4" ry="1.1" fill="#b9dba0" opacity="0.25"/><ellipse cx="1082.2" cy="235.8" rx="1.9" ry="1.6" fill="#b9dba0" opacity="0.40"/><ellipse cx="960.2" cy="349.8" rx="1.3" ry="1.2" fill="#b9dba0" opacity="0.51"/><ellipse cx="1088.9" cy="321.6" rx="1.5" ry="1.2" fill="#b9dba0" opacity="0.52"/><ellipse cx="1074.8" cy="136.5" rx="1.2" ry="0.8" fill="#b9dba0" opacity="0.46"/><ellipse cx="1031.5" cy="235.2" rx="2.4" ry="1.6" fill="#b9dba0" opacity="0.57"/><ellipse cx="1086.7" cy="292.7" rx="2.8" ry="1.7" fill="#b9dba0" opacity="0.40"/><ellipse cx="1017.9" cy="290.4" rx="1.4" ry="1.1" fill="#b9dba0" opacity="0.36"/><ellipse cx="988.7" cy="189.9" rx="0.8" ry="0.6" fill="#b9dba0" opacity="0.56"/><ellipse cx="995.6" cy="272.9" rx="2.6" ry="1.5" fill="#b9dba0" opacity="0.31"/><ellipse cx="1033.4" cy="278.0" rx="2.8" ry="2.1" fill="#b9dba0" opacity="0.57"/><ellipse cx="1061.0" cy="347.8" rx="1.2" ry="0.9" fill="#b9dba0" opacity="0.57"/><ellipse cx="943.4" cy="192.2" rx="2.5" ry="2.2" fill="#b9dba0" opacity="0.40"/><ellipse cx="1072.0" cy="189.7" rx="1.0" ry="0.6" fill="#b9dba0" opacity="0.32"/><ellipse cx="986.2" cy="347.1" rx="2.4" ry="1.5" fill="#b9dba0" opacity="0.46"/><ellipse cx="1061.9" cy="201.9" rx="0.7" ry="0.7" fill="#b9dba0" opacity="0.38"/><ellipse cx="965.7" cy="159.8" rx="3.3" ry="2.2" fill="#b9dba0" opacity="0.35"/><ellipse cx="1074.9" cy="174.1" rx="1.4" ry="1.1" fill="#b9dba0" opacity="0.49"/><ellipse cx="1018.4" cy="295.2" rx="2.7" ry="2.1" fill="#b9dba0" opacity="0.54"/><ellipse cx="946.3" cy="317.3" rx="3.2" ry="2.0" fill="#b9dba0" opacity="0.48"/><ellipse cx="989.3" cy="137.2" rx="2.3" ry="2.0" fill="#b9dba0" opacity="0.48"/><ellipse cx="1043.1" cy="280.5" rx="0.9" ry="0.8" fill="#b9dba0" opacity="0.59"/><ellipse cx="979.8" cy="149.3" rx="2.2" ry="2.0" fill="#b9dba0" opacity="0.59"/><ellipse cx="1004.3" cy="294.0" rx="2.2" ry="1.9" fill="#b9dba0" opacity="0.38"/><ellipse cx="1032.0" cy="159.5" rx="2.3" ry="1.9" fill="#b9dba0" opacity="0.38"/><ellipse cx="1074.1" cy="184.3" rx="1.2" ry="1.0" fill="#b9dba0" opacity="0.38"/><ellipse cx="981.9" cy="141.5" rx="1.1" ry="0.8" fill="#b9dba0" opacity="0.50"/><ellipse cx="957.3" cy="160.9" rx="1.0" ry="0.9" fill="#b9dba0" opacity="0.40"/><ellipse cx="961.6" cy="149.9" rx="2.4" ry="1.4" fill="#b9dba0" opacity="0.44"/><ellipse cx="953.4" cy="183.9" rx="2.5" ry="1.5" fill="#b9dba0" opacity="0.59"/><ellipse cx="1032.3" cy="187.7" rx="2.3" ry="2.0" fill="#b9dba0" opacity="0.28"/><ellipse cx="987.2" cy="338.3" rx="1.9" ry="1.8" fill="#b9dba0" opacity="0.41"/><ellipse cx="996.3" cy="180.2" rx="1.3" ry="1.2" fill="#b9dba0" opacity="0.59"/><ellipse cx="1024.8" cy="174.6" rx="2.3" ry="1.6" fill="#b9dba0" opacity="0.26"/><ellipse cx="1022.8" cy="297.9" rx="1.4" ry="1.0" fill="#b9dba0" opacity="0.46"/><ellipse cx="1005.0" cy="333.6" rx="1.4" ry="1.0" fill="#b9dba0" opacity="0.57"/><ellipse cx="955.3" cy="182.7" rx="1.4" ry="1.3" fill="#b9dba0" opacity="0.32"/><ellipse cx="1010.9" cy="284.4" rx="2.5" ry="2.1" fill="#b9dba0" opacity="0.42"/><ellipse cx="1030.0" cy="343.6" rx="3.3" ry="2.2" fill="#b9dba0" opacity="0.33"/><ellipse cx="997.0" cy="224.5" rx="1.7" ry="1.7" fill="#b9dba0" opacity="0.38"/><ellipse cx="969.2" cy="317.2" rx="1.9" ry="1.6" fill="#b9dba0" opacity="0.41"/><ellipse cx="1038.8" cy="291.6" rx="1.1" ry="1.0" fill="#b9dba0" opacity="0.59"/><ellipse cx="967.0" cy="165.2" rx="2.6" ry="1.5" fill="#b9dba0" opacity="0.27"/><ellipse cx="981.8" cy="171.9" rx="1.8" ry="1.3" fill="#b9dba0" opacity="0.56"/><ellipse cx="987.8" cy="342.2" rx="1.2" ry="0.7" fill="#b9dba0" opacity="0.29"/><ellipse cx="944.0" cy="198.7" rx="3.6" ry="2.1" fill="#b9dba0" opacity="0.40"/><ellipse cx="1054.7" cy="247.8" rx="1.5" ry="1.0" fill="#b9dba0" opacity="0.46"/><ellipse cx="974.5" cy="151.7" rx="1.7" ry="1.5" fill="#b9dba0" opacity="0.49"/><ellipse cx="985.5" cy="187.0" rx="2.2" ry="1.4" fill="#b9dba0" opacity="0.28"/><ellipse cx="1070.0" cy="272.3" rx="2.7" ry="1.7" fill="#b9dba0" opacity="0.25"/><ellipse cx="1077.7" cy="186.2" rx="2.5" ry="2.1" fill="#b9dba0" opacity="0.39"/><ellipse cx="1108.3" cy="333.0" rx="2.3" ry="1.8" fill="#b9dba0" opacity="0.48"/><ellipse cx="1074.4" cy="163.1" rx="1.1" ry="0.9" fill="#b9dba0" opacity="0.26"/><ellipse cx="964.7" cy="224.4" rx="1.1" ry="0.7" fill="#b9dba0" opacity="0.58"/><ellipse cx="1017.1" cy="173.6" rx="1.0" ry="0.6" fill="#b9dba0" opacity="0.31"/><ellipse cx="1063.7" cy="347.6" rx="2.3" ry="1.8" fill="#b9dba0" opacity="0.34"/><ellipse cx="1093.3" cy="264.5" rx="0.9" ry="0.6" fill="#b9dba0" opacity="0.50"/><ellipse cx="988.4" cy="150.4" rx="1.4" ry="0.9" fill="#b9dba0" opacity="0.25"/><ellipse cx="981.0" cy="193.3" rx="2.2" ry="2.2" fill="#b9dba0" opacity="0.29"/><ellipse cx="1103.6" cy="348.4" rx="1.6" ry="1.1" fill="#b9dba0" opacity="0.36"/><ellipse cx="1013.6" cy="240.3" rx="0.7" ry="0.7" fill="#b9dba0" opacity="0.31"/><ellipse cx="1000.5" cy="243.2" rx="3.0" ry="2.1" fill="#b9dba0" opacity="0.27"/><ellipse cx="967.8" cy="287.4" rx="2.1" ry="1.7" fill="#b9dba0" opacity="0.53"/><ellipse cx="1080.5" cy="155.7" rx="1.4" ry="0.9" fill="#b9dba0" opacity="0.53"/><ellipse cx="1078.7" cy="185.9" rx="2.4" ry="1.7" fill="#b9dba0" opacity="0.30"/><ellipse cx="974.5" cy="263.1" rx="1.9" ry="1.6" fill="#b9dba0" opacity="0.34"/><ellipse cx="946.4" cy="294.4" rx="1.6" ry="1.1" fill="#b9dba0" opacity="0.49"/><ellipse cx="1048.0" cy="333.4" rx="1.7" ry="1.1" fill="#b9dba0" opacity="0.34"/><ellipse cx="968.4" cy="184.8" rx="3.0" ry="1.9" fill="#b9dba0" opacity="0.59"/><ellipse cx="1079.2" cy="203.1" rx="1.8" ry="1.8" fill="#b9dba0" opacity="0.46"/><ellipse cx="956.5" cy="145.8" rx="1.5" ry="0.8" fill="#b9dba0" opacity="0.56"/><ellipse cx="1021.3" cy="178.5" rx="2.0" ry="1.4" fill="#b9dba0" opacity="0.38"/><ellipse cx="959.5" cy="150.4" rx="1.7" ry="1.4" fill="#b9dba0" opacity="0.48"/><ellipse cx="979.6" cy="205.0" rx="2.8" ry="1.7" fill="#b9dba0" opacity="0.38"/><ellipse cx="1048.7" cy="158.1" rx="2.0" ry="1.6" fill="#b9dba0" opacity="0.26"/><ellipse cx="1111.7" cy="335.1" rx="2.0" ry="1.3" fill="#b9dba0" opacity="0.35"/><ellipse cx="1017.1" cy="153.9" rx="1.3" ry="0.8" fill="#b9dba0" opacity="0.27"/><ellipse cx="991.1" cy="303.9" rx="0.8" ry="0.8" fill="#b9dba0" opacity="0.31"/><ellipse cx="1033.5" cy="318.3" rx="1.4" ry="0.9" fill="#b9dba0" opacity="0.40"/><ellipse cx="999.8" cy="162.1" rx="2.4" ry="2.2" fill="#b9dba0" opacity="0.34"/><ellipse cx="1023.3" cy="345.4" rx="1.5" ry="1.1" fill="#b9dba0" opacity="0.50"/><ellipse cx="1068.7" cy="163.5" rx="2.3" ry="2.1" fill="#b9dba0" opacity="0.53"/><ellipse cx="1000.0" cy="189.5" rx="2.4" ry="1.4" fill="#b9dba0" opacity="0.30"/><ellipse cx="1089.7" cy="205.7" rx="2.3" ry="1.8" fill="#b9dba0" opacity="0.32"/><ellipse cx="1041.0" cy="137.3" rx="2.7" ry="1.6" fill="#b9dba0" opacity="0.58"/><ellipse cx="987.3" cy="215.5" rx="1.5" ry="1.2" fill="#b9dba0" opacity="0.29"/><ellipse cx="980.5" cy="335.1" rx="2.8" ry="1.6" fill="#b9dba0" opacity="0.51"/><ellipse cx="1082.5" cy="190.7" rx="2.0" ry="1.2" fill="#b9dba0" opacity="0.30"/><ellipse cx="949.4" cy="326.4" rx="1.7" ry="1.3" fill="#b9dba0" opacity="0.52"/><ellipse cx="1077.1" cy="326.4" rx="1.4" ry="1.1" fill="#b9dba0" opacity="0.29"/><ellipse cx="997.9" cy="140.7" rx="1.0" ry="1.0" fill="#b9dba0" opacity="0.27"/><ellipse cx="1070.0" cy="178.7" rx="2.0" ry="1.2" fill="#b9dba0" opacity="0.58"/><ellipse cx="995.2" cy="327.3" rx="1.1" ry="0.8" fill="#b9dba0" opacity="0.54"/><ellipse cx="1031.2" cy="241.5" rx="3.1" ry="2.0" fill="#b9dba0" opacity="0.32"/><ellipse cx="947.1" cy="265.0" rx="2.3" ry="1.7" fill="#b9dba0" opacity="0.28"/><ellipse cx="1003.1" cy="183.9" rx="2.2" ry="1.9" fill="#b9dba0" opacity="0.56"/><ellipse cx="1113.7" cy="230.4" rx="3.0" ry="1.7" fill="#b9dba0" opacity="0.32"/><ellipse cx="973.5" cy="255.3" rx="1.9" ry="1.7" fill="#b9dba0" opacity="0.58"/><ellipse cx="972.9" cy="335.2" rx="3.1" ry="1.8" fill="#b9dba0" opacity="0.38"/><ellipse cx="1101.8" cy="180.6" rx="2.4" ry="1.4" fill="#b9dba0" opacity="0.57"/><ellipse cx="1038.4" cy="166.6" rx="2.5" ry="1.9" fill="#b9dba0" opacity="0.46"/><ellipse cx="986.1" cy="195.7" rx="2.0" ry="1.4" fill="#b9dba0" opacity="0.28"/><ellipse cx="1071.2" cy="187.2" rx="1.6" ry="1.4" fill="#b9dba0" opacity="0.46"/><ellipse cx="1098.3" cy="179.4" rx="2.8" ry="1.8" fill="#b9dba0" opacity="0.50"/><ellipse cx="1018.0" cy="154.0" rx="2.9" ry="1.9" fill="#b9dba0" opacity="0.30"/><ellipse cx="999.5" cy="303.6" rx="1.0" ry="0.9" fill="#b9dba0" opacity="0.39"/><ellipse cx="1048.6" cy="201.7" rx="1.0" ry="0.9" fill="#b9dba0" opacity="0.32"/><ellipse cx="995.9" cy="246.0" rx="1.8" ry="1.4" fill="#b9dba0" opacity="0.59"/><ellipse cx="1025.6" cy="342.9" rx="1.4" ry="0.9" fill="#b9dba0" opacity="0.30"/><ellipse cx="970.4" cy="151.1" rx="2.8" ry="2.1" fill="#b9dba0" opacity="0.37"/><ellipse cx="1101.1" cy="223.4" rx="1.6" ry="1.1" fill="#b9dba0" opacity="0.48"/><ellipse cx="1068.9" cy="343.8" rx="2.0" ry="1.2" fill="#b9dba0" opacity="0.53"/><ellipse cx="1043.7" cy="284.0" rx="3.0" ry="2.1" fill="#b9dba0" opacity="0.39"/><ellipse cx="972.7" cy="160.4" rx="1.9" ry="1.9" fill="#b9dba0" opacity="0.36"/><ellipse cx="1024.5" cy="244.1" rx="2.6" ry="2.0" fill="#b9dba0" opacity="0.44"/><ellipse cx="1102.7" cy="275.6" rx="1.5" ry="1.1" fill="#b9dba0" opacity="0.46"/><ellipse cx="1077.8" cy="192.3" rx="1.6" ry="1.2" fill="#b9dba0" opacity="0.57"/><ellipse cx="1034.8" cy="195.7" rx="2.2" ry="1.9" fill="#b9dba0" opacity="0.49"/><ellipse cx="944.8" cy="177.5" rx="2.1" ry="1.9" fill="#b9dba0" opacity="0.33"/><ellipse cx="951.0" cy="193.0" rx="3.0" ry="1.8" fill="#b9dba0" opacity="0.58"/><ellipse cx="1036.9" cy="337.8" rx="2.8" ry="2.1" fill="#b9dba0" opacity="0.32"/><ellipse cx="1071.2" cy="323.9" rx="1.3" ry="0.7" fill="#b9dba0" opacity="0.51"/><ellipse cx="1044.9" cy="349.9" rx="0.8" ry="0.7" fill="#b9dba0" opacity="0.26"/><ellipse cx="1064.2" cy="273.6" rx="1.0" ry="0.9" fill="#b9dba0" opacity="0.46"/><ellipse cx="1058.0" cy="348.3" rx="2.9" ry="2.2" fill="#b9dba0" opacity="0.39"/><ellipse cx="1114.1" cy="290.3" rx="1.0" ry="0.9" fill="#b9dba0" opacity="0.37"/><ellipse cx="1069.3" cy="148.0" rx="1.7" ry="1.7" fill="#b9dba0" opacity="0.40"/><ellipse cx="1078.6" cy="261.7" rx="3.0" ry="2.0" fill="#b9dba0" opacity="0.37"/><ellipse cx="1100.2" cy="258.4" rx="1.1" ry="0.9" fill="#b9dba0" opacity="0.49"/><ellipse cx="1030.6" cy="136.2" rx="1.9" ry="1.3" fill="#b9dba0" opacity="0.45"/><ellipse cx="1107.3" cy="339.4" rx="1.4" ry="1.1" fill="#b9dba0" opacity="0.34"/><ellipse cx="996.4" cy="301.7" rx="1.8" ry="1.6" fill="#b9dba0" opacity="0.55"/><ellipse cx="966.9" cy="302.4" rx="3.0" ry="2.1" fill="#b9dba0" opacity="0.40"/><ellipse cx="1103.4" cy="154.2" rx="0.9" ry="0.8" fill="#b9dba0" opacity="0.29"/><ellipse cx="978.3" cy="278.9" rx="2.1" ry="1.2" fill="#b9dba0" opacity="0.58"/><ellipse cx="1081.7" cy="301.9" rx="2.6" ry="2.0" fill="#b9dba0" opacity="0.58"/><ellipse cx="1023.3" cy="161.1" rx="1.3" ry="0.8" fill="#b9dba0" opacity="0.27"/><ellipse cx="963.8" cy="275.1" rx="1.6" ry="1.0" fill="#b9dba0" opacity="0.26"/><ellipse cx="1096.4" cy="142.6" rx="2.1" ry="1.4" fill="#b9dba0" opacity="0.51"/><ellipse cx="1000.7" cy="340.2" rx="1.4" ry="0.8" fill="#b9dba0" opacity="0.29"/><ellipse cx="973.4" cy="245.0" rx="1.5" ry="0.9" fill="#b9dba0" opacity="0.42"/><ellipse cx="979.5" cy="334.4" rx="3.5" ry="2.2" fill="#b9dba0" opacity="0.47"/><ellipse cx="1033.7" cy="323.1" rx="1.3" ry="0.8" fill="#b9dba0" opacity="0.53"/><ellipse cx="1059.7" cy="298.8" rx="2.2" ry="1.3" fill="#b9dba0" opacity="0.59"/><ellipse cx="1101.6" cy="170.3" rx="2.0" ry="1.5" fill="#b9dba0" opacity="0.31"/><ellipse cx="964.9" cy="238.5" rx="1.3" ry="1.0" fill="#b9dba0" opacity="0.44"/><ellipse cx="1073.6" cy="264.7" rx="2.6" ry="2.0" fill="#b9dba0" opacity="0.59"/><ellipse cx="1111.8" cy="165.9" rx="2.8" ry="2.1" fill="#b9dba0" opacity="0.44"/><ellipse cx="995.6" cy="141.3" rx="1.0" ry="0.8" fill="#b9dba0" opacity="0.47"/><ellipse cx="1004.0" cy="343.9" rx="2.5" ry="1.5" fill="#b9dba0" opacity="0.48"/><ellipse cx="1003.7" cy="268.1" rx="2.6" ry="2.2" fill="#b9dba0" opacity="0.59"/><ellipse cx="952.2" cy="137.2" rx="1.3" ry="0.9" fill="#b9dba0" opacity="0.29"/><ellipse cx="1065.1" cy="135.4" rx="2.3" ry="1.3" fill="#b9dba0" opacity="0.36"/><ellipse cx="1039.9" cy="136.9" rx="3.0" ry="2.0" fill="#b9dba0" opacity="0.54"/><ellipse cx="943.3" cy="179.6" rx="2.1" ry="1.9" fill="#b9dba0" opacity="0.58"/><ellipse cx="987.5" cy="328.7" rx="2.0" ry="1.1" fill="#b9dba0" opacity="0.39"/><ellipse cx="1111.7" cy="159.3" rx="1.2" ry="1.0" fill="#b9dba0" opacity="0.38"/><ellipse cx="1003.5" cy="333.0" rx="0.9" ry="0.8" fill="#b9dba0" opacity="0.30"/><ellipse cx="1043.4" cy="311.2" rx="2.0" ry="1.4" fill="#b9dba0" opacity="0.45"/><ellipse cx="1012.8" cy="254.6" rx="0.9" ry="0.7" fill="#b9dba0" opacity="0.33"/><ellipse cx="983.0" cy="155.4" rx="1.5" ry="1.2" fill="#b9dba0" opacity="0.52"/><ellipse cx="1046.1" cy="174.8" rx="0.9" ry="0.7" fill="#b9dba0" opacity="0.28"/><ellipse cx="1053.9" cy="228.2" rx="2.5" ry="1.4" fill="#b9dba0" opacity="0.34"/><ellipse cx="967.9" cy="202.2" rx="3.2" ry="2.1" fill="#b9dba0" opacity="0.40"/><ellipse cx="969.9" cy="145.0" rx="3.0" ry="2.0" fill="#b9dba0" opacity="0.30"/><ellipse cx="1049.8" cy="147.8" rx="1.2" ry="1.1" fill="#b9dba0" opacity="0.51"/><ellipse cx="1065.7" cy="247.3" rx="2.3" ry="1.7" fill="#b9dba0" opacity="0.48"/><ellipse cx="956.9" cy="333.6" rx="1.3" ry="1.0" fill="#b9dba0" opacity="0.32"/><ellipse cx="999.3" cy="193.6" rx="1.3" ry="1.0" fill="#b9dba0" opacity="0.49"/><ellipse cx="1015.9" cy="169.3" rx="2.6" ry="1.5" fill="#b9dba0" opacity="0.57"/><ellipse cx="958.4" cy="245.5" rx="1.4" ry="0.9" fill="#b9dba0" opacity="0.42"/><ellipse cx="1082.7" cy="239.2" rx="1.5" ry="1.4" fill="#b9dba0" opacity="0.49"/><ellipse cx="960.6" cy="205.8" rx="2.4" ry="1.5" fill="#b9dba0" opacity="0.37"/><ellipse cx="989.2" cy="350.2" rx="0.7" ry="0.6" fill="#b9dba0" opacity="0.50"/><ellipse cx="1091.5" cy="275.1" rx="3.1" ry="2.0" fill="#b9dba0" opacity="0.29"/><ellipse cx="1007.2" cy="282.7" rx="0.9" ry="0.7" fill="#b9dba0" opacity="0.56"/><ellipse cx="1077.8" cy="325.3" rx="3.3" ry="2.2" fill="#b9dba0" opacity="0.58"/><ellipse cx="1039.5" cy="178.2" rx="1.7" ry="1.4" fill="#b9dba0" opacity="0.38"/><ellipse cx="1029.8" cy="264.4" rx="1.5" ry="1.0" fill="#b9dba0" opacity="0.43"/><ellipse cx="1013.9" cy="281.1" rx="1.8" ry="1.5" fill="#b9dba0" opacity="0.52"/><ellipse cx="1063.4" cy="306.8" rx="1.7" ry="1.0" fill="#b9dba0" opacity="0.43"/><ellipse cx="1006.3" cy="198.9" rx="2.9" ry="1.7" fill="#b9dba0" opacity="0.42"/><ellipse cx="1068.2" cy="181.8" rx="1.5" ry="1.2" fill="#b9dba0" opacity="0.38"/><ellipse cx="1072.3" cy="296.3" rx="1.6" ry="1.0" fill="#b9dba0" opacity="0.48"/><ellipse cx="988.5" cy="148.4" rx="1.2" ry="0.7" fill="#b9dba0" opacity="0.43"/><ellipse cx="980.9" cy="209.1" rx="3.0" ry="1.9" fill="#b9dba0" opacity="0.42"/><ellipse cx="1005.3" cy="194.4" rx="3.0" ry="1.7" fill="#b9dba0" opacity="0.55"/><ellipse cx="1092.0" cy="231.6" rx="2.0" ry="1.1" fill="#b9dba0" opacity="0.31"/><ellipse cx="968.5" cy="196.8" rx="2.5" ry="2.0" fill="#b9dba0" opacity="0.55"/><ellipse cx="1096.0" cy="229.0" rx="2.4" ry="1.8" fill="#b9dba0" opacity="0.29"/><ellipse cx="1098.1" cy="231.7" rx="1.9" ry="1.6" fill="#b9dba0" opacity="0.26"/><ellipse cx="1008.9" cy="218.4" rx="1.9" ry="1.2" fill="#b9dba0" opacity="0.37"/><ellipse cx="1059.2" cy="272.4" rx="1.0" ry="0.6" fill="#b9dba0" opacity="0.46"/><ellipse cx="992.1" cy="179.0" rx="2.4" ry="2.1" fill="#b9dba0" opacity="0.46"/><ellipse cx="1041.0" cy="205.8" rx="1.7" ry="1.1" fill="#b9dba0" opacity="0.46"/><ellipse cx="1029.7" cy="161.9" rx="1.5" ry="1.1" fill="#b9dba0" opacity="0.38"/><ellipse cx="982.8" cy="323.4" rx="2.0" ry="1.5" fill="#b9dba0" opacity="0.26"/><ellipse cx="1079.6" cy="313.3" rx="2.5" ry="1.8" fill="#b9dba0" opacity="0.60"/><ellipse cx="950.5" cy="218.7" rx="2.6" ry="1.6" fill="#b9dba0" opacity="0.54"/><ellipse cx="959.2" cy="192.2" rx="2.3" ry="1.3" fill="#b9dba0" opacity="0.28"/><ellipse cx="1021.4" cy="181.8" rx="0.8" ry="0.7" fill="#b9dba0" opacity="0.38"/><ellipse cx="1016.3" cy="246.7" rx="2.4" ry="1.7" fill="#b9dba0" opacity="0.59"/><ellipse cx="970.4" cy="247.3" rx="2.0" ry="1.2" fill="#b9dba0" opacity="0.32"/><ellipse cx="1093.7" cy="213.7" rx="2.3" ry="1.6" fill="#b9dba0" opacity="0.35"/><ellipse cx="955.7" cy="345.1" rx="1.2" ry="0.8" fill="#b9dba0" opacity="0.44"/><ellipse cx="1003.8" cy="223.4" rx="2.5" ry="1.7" fill="#b9dba0" opacity="0.41"/><ellipse cx="1011.6" cy="186.2" rx="2.2" ry="1.3" fill="#b9dba0" opacity="0.38"/><ellipse cx="1068.6" cy="141.3" rx="3.3" ry="2.1" fill="#b9dba0" opacity="0.49"/><ellipse cx="1027.5" cy="238.9" rx="1.3" ry="0.9" fill="#b9dba0" opacity="0.49"/><ellipse cx="986.0" cy="276.8" rx="1.8" ry="1.6" fill="#b9dba0" opacity="0.43"/><ellipse cx="995.6" cy="256.1" rx="2.1" ry="1.4" fill="#b9dba0" opacity="0.30"/><ellipse cx="994.7" cy="284.3" rx="2.6" ry="1.6" fill="#b9dba0" opacity="0.45"/><ellipse cx="1039.6" cy="300.7" rx="2.3" ry="1.3" fill="#b9dba0" opacity="0.54"/><ellipse cx="1054.6" cy="158.4" rx="1.1" ry="0.7" fill="#b9dba0" opacity="0.59"/><ellipse cx="971.8" cy="317.1" rx="1.1" ry="0.6" fill="#b9dba0" opacity="0.40"/><ellipse cx="1085.5" cy="286.5" rx="2.3" ry="2.0" fill="#b9dba0" opacity="0.56"/><ellipse cx="1000.0" cy="140.7" rx="0.7" ry="0.7" fill="#b9dba0" opacity="0.47"/><ellipse cx="962.0" cy="170.1" rx="1.8" ry="1.0" fill="#b9dba0" opacity="0.57"/><ellipse cx="1092.4" cy="352.8" rx="2.3" ry="1.9" fill="#b9dba0" opacity="0.57"/><ellipse cx="1082.1" cy="296.1" rx="1.3" ry="0.7" fill="#b9dba0" opacity="0.44"/><ellipse cx="1047.5" cy="324.6" rx="2.4" ry="1.7" fill="#b9dba0" opacity="0.53"/><ellipse cx="984.1" cy="287.9" rx="1.1" ry="1.0" fill="#b9dba0" opacity="0.58"/><ellipse cx="1005.1" cy="247.2" rx="1.0" ry="0.6" fill="#b9dba0" opacity="0.51"/><ellipse cx="1093.4" cy="213.5" rx="1.8" ry="1.2" fill="#b9dba0" opacity="0.48"/><ellipse cx="1011.7" cy="250.4" rx="2.9" ry="2.1" fill="#b9dba0" opacity="0.43"/><ellipse cx="1077.9" cy="178.5" rx="1.9" ry="1.2" fill="#b9dba0" opacity="0.28"/><ellipse cx="989.0" cy="274.8" rx="1.8" ry="1.2" fill="#b9dba0" opacity="0.33"/><ellipse cx="1017.1" cy="135.4" rx="1.7" ry="1.0" fill="#b9dba0" opacity="0.44"/><ellipse cx="1045.7" cy="272.7" rx="2.3" ry="1.8" fill="#b9dba0" opacity="0.55"/><ellipse cx="973.9" cy="157.2" rx="1.6" ry="1.4" fill="#b9dba0" opacity="0.33"/><ellipse cx="1091.8" cy="220.4" rx="1.3" ry="0.9" fill="#b9dba0" opacity="0.32"/><ellipse cx="1023.7" cy="253.3" rx="2.3" ry="1.4" fill="#b9dba0" opacity="0.26"/><ellipse cx="1102.8" cy="178.8" rx="2.7" ry="1.8" fill="#b9dba0" opacity="0.44"/><ellipse cx="978.9" cy="306.8" rx="2.1" ry="1.8" fill="#b9dba0" opacity="0.45"/><ellipse cx="1053.8" cy="216.8" rx="1.1" ry="0.7" fill="#b9dba0" opacity="0.49"/><ellipse cx="949.8" cy="189.7" rx="1.1" ry="1.0" fill="#b9dba0" opacity="0.42"/><ellipse cx="984.6" cy="201.0" rx="1.9" ry="1.2" fill="#b9dba0" opacity="0.50"/><ellipse cx="960.9" cy="184.2" rx="1.2" ry="1.1" fill="#b9dba0" opacity="0.49"/><ellipse cx="1076.8" cy="354.1" rx="1.1" ry="0.7" fill="#b9dba0" opacity="0.39"/><ellipse cx="1103.0" cy="221.3" rx="1.3" ry="0.7" fill="#b9dba0" opacity="0.43"/><ellipse cx="1085.6" cy="239.7" rx="2.1" ry="1.3" fill="#b9dba0" opacity="0.39"/><ellipse cx="1056.0" cy="258.1" rx="1.8" ry="1.5" fill="#b9dba0" opacity="0.45"/><ellipse cx="1091.5" cy="152.6" rx="3.6" ry="2.0" fill="#b9dba0" opacity="0.25"/><ellipse cx="1022.8" cy="163.8" rx="2.8" ry="1.7" fill="#b9dba0" opacity="0.32"/><ellipse cx="944.8" cy="232.2" rx="2.0" ry="1.6" fill="#b9dba0" opacity="0.29"/><ellipse cx="1057.6" cy="198.1" rx="1.6" ry="1.1" fill="#b9dba0" opacity="0.53"/><ellipse cx="961.1" cy="295.8" rx="2.1" ry="2.1" fill="#b9dba0" opacity="0.50"/><ellipse cx="1005.2" cy="174.5" rx="1.9" ry="1.4" fill="#b9dba0" opacity="0.29"/><ellipse cx="1007.7" cy="230.8" rx="2.7" ry="2.2" fill="#b9dba0" opacity="0.48"/><ellipse cx="989.5" cy="159.1" rx="2.2" ry="1.3" fill="#b9dba0" opacity="0.32"/><ellipse cx="1017.6" cy="302.8" rx="1.2" ry="0.8" fill="#b9dba0" opacity="0.40"/><ellipse cx="1104.3" cy="332.4" rx="2.0" ry="1.5" fill="#b9dba0" opacity="0.26"/><ellipse cx="1018.3" cy="336.4" rx="2.4" ry="1.5" fill="#b9dba0" opacity="0.27"/><ellipse cx="1101.8" cy="159.0" rx="1.8" ry="1.7" fill="#b9dba0" opacity="0.38"/><ellipse cx="963.0" cy="239.1" rx="1.0" ry="0.8" fill="#b9dba0" opacity="0.28"/><ellipse cx="956.8" cy="177.8" rx="1.4" ry="0.8" fill="#b9dba0" opacity="0.40"/><ellipse cx="984.8" cy="188.0" rx="1.1" ry="0.7" fill="#b9dba0" opacity="0.28"/><ellipse cx="1091.2" cy="157.1" rx="2.5" ry="1.7" fill="#b9dba0" opacity="0.50"/><ellipse cx="989.3" cy="244.3" rx="1.6" ry="1.3" fill="#b9dba0" opacity="0.45"/><ellipse cx="993.0" cy="195.5" rx="1.2" ry="0.7" fill="#b9dba0" opacity="0.42"/><ellipse cx="980.8" cy="160.3" rx="2.2" ry="1.4" fill="#b9dba0" opacity="0.38"/><ellipse cx="1012.7" cy="331.4" rx="3.7" ry="2.2" fill="#b9dba0" opacity="0.60"/><ellipse cx="1053.7" cy="313.1" rx="1.2" ry="0.7" fill="#b9dba0" opacity="0.31"/><ellipse cx="986.1" cy="270.6" rx="2.1" ry="1.3" fill="#b9dba0" opacity="0.28"/><ellipse cx="1056.0" cy="158.0" rx="2.5" ry="1.6" fill="#b9dba0" opacity="0.27"/><ellipse cx="974.3" cy="346.2" rx="1.7" ry="1.3" fill="#b9dba0" opacity="0.49"/><ellipse cx="1069.8" cy="278.0" rx="2.1" ry="1.5" fill="#b9dba0" opacity="0.32"/><ellipse cx="987.6" cy="308.2" rx="1.4" ry="1.1" fill="#b9dba0" opacity="0.53"/><ellipse cx="970.6" cy="169.2" rx="1.2" ry="0.9" fill="#b9dba0" opacity="0.29"/><ellipse cx="967.9" cy="292.7" rx="2.5" ry="2.0" fill="#b9dba0" opacity="0.55"/><ellipse cx="993.7" cy="193.8" rx="0.8" ry="0.6" fill="#b9dba0" opacity="0.38"/><ellipse cx="943.2" cy="324.5" rx="1.1" ry="0.6" fill="#b9dba0" opacity="0.33"/><ellipse cx="985.0" cy="140.3" rx="2.5" ry="1.7" fill="#b9dba0" opacity="0.43"/><ellipse cx="962.7" cy="321.6" rx="2.9" ry="1.7" fill="#b9dba0" opacity="0.49"/><ellipse cx="1036.7" cy="313.8" rx="1.8" ry="1.5" fill="#b9dba0" opacity="0.39"/><ellipse cx="1101.4" cy="313.7" rx="2.0" ry="1.1" fill="#b9dba0" opacity="0.38"/><ellipse cx="1104.1" cy="306.1" rx="2.2" ry="1.3" fill="#b9dba0" opacity="0.36"/><ellipse cx="963.2" cy="164.9" rx="2.0" ry="1.1" fill="#b9dba0" opacity="0.60"/><ellipse cx="1018.5" cy="309.5" rx="1.6" ry="0.9" fill="#b9dba0" opacity="0.31"/><ellipse cx="954.2" cy="234.6" rx="1.8" ry="1.4" fill="#b9dba0" opacity="0.58"/><ellipse cx="1043.0" cy="187.3" rx="1.8" ry="1.4" fill="#b9dba0" opacity="0.48"/><ellipse cx="1114.4" cy="179.6" rx="0.7" ry="0.6" fill="#b9dba0" opacity="0.27"/><ellipse cx="1109.1" cy="319.1" rx="1.5" ry="1.5" fill="#b9dba0" opacity="0.38"/><ellipse cx="986.5" cy="271.6" rx="1.9" ry="1.5" fill="#b9dba0" opacity="0.42"/><ellipse cx="1011.4" cy="157.5" rx="2.8" ry="1.9" fill="#b9dba0" opacity="0.29"/><ellipse cx="1084.7" cy="331.9" rx="2.0" ry="1.5" fill="#b9dba0" opacity="0.35"/><ellipse cx="1073.5" cy="270.6" rx="2.6" ry="1.5" fill="#b9dba0" opacity="0.45"/><ellipse cx="946.1" cy="236.2" rx="3.1" ry="1.8" fill="#b9dba0" opacity="0.47"/><ellipse cx="1024.2" cy="274.5" rx="3.0" ry="1.7" fill="#b9dba0" opacity="0.25"/><ellipse cx="996.7" cy="327.8" rx="1.9" ry="1.9" fill="#b9dba0" opacity="0.48"/><ellipse cx="1080.3" cy="187.4" rx="1.5" ry="1.0" fill="#b9dba0" opacity="0.44"/><ellipse cx="984.0" cy="248.5" rx="1.9" ry="1.2" fill="#b9dba0" opacity="0.31"/><ellipse cx="944.2" cy="194.6" rx="2.4" ry="2.1" fill="#b9dba0" opacity="0.54"/><ellipse cx="952.2" cy="207.5" rx="1.0" ry="0.8" fill="#b9dba0" opacity="0.50"/><ellipse cx="1082.0" cy="185.4" rx="3.3" ry="2.0" fill="#b9dba0" opacity="0.28"/><ellipse cx="1074.4" cy="305.1" rx="3.5" ry="1.9" fill="#b9dba0" opacity="0.36"/><ellipse cx="1086.1" cy="337.6" rx="2.6" ry="1.7" fill="#b9dba0" opacity="0.55"/><ellipse cx="1039.6" cy="195.6" rx="1.6" ry="1.5" fill="#b9dba0" opacity="0.55"/><ellipse cx="1095.7" cy="188.3" rx="1.8" ry="1.7" fill="#b9dba0" opacity="0.52"/><ellipse cx="1074.3" cy="202.4" rx="1.7" ry="1.1" fill="#b9dba0" opacity="0.41"/><ellipse cx="1082.9" cy="170.1" rx="2.0" ry="1.2" fill="#b9dba0" opacity="0.31"/><ellipse cx="953.8" cy="300.6" rx="1.8" ry="1.7" fill="#b9dba0" opacity="0.34"/><ellipse cx="1056.5" cy="327.2" rx="1.4" ry="1.3" fill="#b9dba0" opacity="0.37"/><ellipse cx="963.1" cy="219.7" rx="1.7" ry="1.1" fill="#b9dba0" opacity="0.32"/><ellipse cx="997.6" cy="197.1" rx="2.2" ry="1.6" fill="#b9dba0" opacity="0.38"/><ellipse cx="1101.4" cy="341.7" rx="2.5" ry="1.5" fill="#b9dba0" opacity="0.34"/><ellipse cx="986.0" cy="157.7" rx="2.1" ry="1.8" fill="#b9dba0" opacity="0.40"/><ellipse cx="1113.4" cy="240.9" rx="3.3" ry="1.9" fill="#b9dba0" opacity="0.38"/><ellipse cx="1101.6" cy="280.2" rx="1.8" ry="1.4" fill="#b9dba0" opacity="0.41"/><ellipse cx="965.2" cy="337.6" rx="2.7" ry="2.0" fill="#b9dba0" opacity="0.60"/><ellipse cx="1006.1" cy="317.3" rx="2.5" ry="1.8" fill="#b9dba0" opacity="0.39"/><ellipse cx="956.5" cy="350.2" rx="1.6" ry="1.2" fill="#b9dba0" opacity="0.45"/><ellipse cx="1095.9" cy="342.9" rx="1.3" ry="1.2" fill="#b9dba0" opacity="0.27"/><ellipse cx="1031.3" cy="263.3" rx="2.9" ry="2.2" fill="#b9dba0" opacity="0.37"/><ellipse cx="1043.8" cy="254.4" rx="1.3" ry="1.0" fill="#b9dba0" opacity="0.42"/><ellipse cx="1018.7" cy="350.4" rx="1.0" ry="0.9" fill="#b9dba0" opacity="0.31"/><ellipse cx="982.1" cy="306.7" rx="2.1" ry="1.5" fill="#b9dba0" opacity="0.26"/><ellipse cx="993.5" cy="149.7" rx="1.9" ry="1.6" fill="#b9dba0" opacity="0.27"/><ellipse cx="1025.8" cy="142.5" rx="2.0" ry="1.6" fill="#b9dba0" opacity="0.41"/><ellipse cx="981.5" cy="175.9" rx="2.6" ry="1.9" fill="#b9dba0" opacity="0.50"/><ellipse cx="1001.5" cy="312.5" rx="2.2" ry="1.6" fill="#b9dba0" opacity="0.45"/><ellipse cx="1033.7" cy="275.5" rx="1.3" ry="1.1" fill="#b9dba0" opacity="0.55"/><ellipse cx="1077.2" cy="293.1" rx="1.5" ry="1.0" fill="#b9dba0" opacity="0.35"/><ellipse cx="1006.9" cy="352.0" rx="2.1" ry="2.0" fill="#b9dba0" opacity="0.44"/><ellipse cx="1008.6" cy="304.4" rx="1.5" ry="0.9" fill="#b9dba0" opacity="0.44"/><ellipse cx="1072.5" cy="242.7" rx="2.2" ry="1.8" fill="#b9dba0" opacity="0.42"/><ellipse cx="941.1" cy="192.0" rx="2.8" ry="1.8" fill="#b9dba0" opacity="0.41"/><ellipse cx="1068.5" cy="282.2" rx="2.2" ry="1.5" fill="#b9dba0" opacity="0.51"/><ellipse cx="975.4" cy="203.4" rx="1.0" ry="0.8" fill="#b9dba0" opacity="0.51"/><ellipse cx="1041.5" cy="173.1" rx="1.3" ry="0.8" fill="#b9dba0" opacity="0.30"/><ellipse cx="957.8" cy="190.4" rx="1.8" ry="1.0" fill="#b9dba0" opacity="0.58"/><ellipse cx="1107.4" cy="137.9" rx="1.3" ry="1.1" fill="#b9dba0" opacity="0.40"/><ellipse cx="994.8" cy="138.0" rx="1.2" ry="1.0" fill="#b9dba0" opacity="0.29"/><ellipse cx="1004.9" cy="161.3" rx="1.5" ry="1.0" fill="#b9dba0" opacity="0.41"/><ellipse cx="1078.7" cy="258.6" rx="1.2" ry="1.1" fill="#b9dba0" opacity="0.56"/><ellipse cx="1095.4" cy="142.4" rx="1.4" ry="1.0" fill="#b9dba0" opacity="0.54"/><ellipse cx="974.5" cy="272.8" rx="2.5" ry="2.2" fill="#b9dba0" opacity="0.50"/><ellipse cx="948.2" cy="195.3" rx="1.2" ry="0.8" fill="#b9dba0" opacity="0.31"/><ellipse cx="1079.3" cy="156.2" rx="2.2" ry="2.0" fill="#b9dba0" opacity="0.33"/><ellipse cx="1071.4" cy="267.2" rx="2.3" ry="2.1" fill="#b9dba0" opacity="0.52"/><ellipse cx="1012.4" cy="300.2" rx="2.7" ry="2.1" fill="#b9dba0" opacity="0.53"/><ellipse cx="1023.1" cy="313.7" rx="1.5" ry="1.5" fill="#b9dba0" opacity="0.42"/><ellipse cx="1107.5" cy="153.1" rx="2.6" ry="1.8" fill="#b9dba0" opacity="0.26"/><ellipse cx="1082.8" cy="195.5" rx="2.5" ry="2.1" fill="#b9dba0" opacity="0.26"/><ellipse cx="977.5" cy="167.2" rx="2.4" ry="1.7" fill="#b9dba0" opacity="0.30"/><ellipse cx="1012.9" cy="343.2" rx="1.3" ry="1.3" fill="#b9dba0" opacity="0.60"/><ellipse cx="1068.3" cy="144.3" rx="1.9" ry="1.4" fill="#b9dba0" opacity="0.30"/><ellipse cx="1030.1" cy="311.4" rx="2.7" ry="2.0" fill="#b9dba0" opacity="0.34"/><ellipse cx="982.6" cy="236.2" rx="2.6" ry="1.5" fill="#b9dba0" opacity="0.43"/><ellipse cx="1030.2" cy="352.6" rx="0.8" ry="0.6" fill="#b9dba0" opacity="0.36"/><ellipse cx="962.6" cy="227.0" rx="2.9" ry="2.1" fill="#b9dba0" opacity="0.56"/><ellipse cx="993.5" cy="295.4" rx="2.2" ry="1.5" fill="#b9dba0" opacity="0.52"/><ellipse cx="1081.0" cy="350.1" rx="1.0" ry="0.9" fill="#b9dba0" opacity="0.50"/><ellipse cx="1026.9" cy="301.5" rx="1.1" ry="0.8" fill="#b9dba0" opacity="0.40"/><ellipse cx="1016.2" cy="258.4" rx="1.6" ry="1.2" fill="#b9dba0" opacity="0.38"/><ellipse cx="1110.1" cy="154.9" rx="2.3" ry="1.8" fill="#b9dba0" opacity="0.41"/><ellipse cx="1044.0" cy="215.7" rx="1.1" ry="0.6" fill="#b9dba0" opacity="0.58"/><ellipse cx="990.7" cy="237.3" rx="1.2" ry="0.7" fill="#b9dba0" opacity="0.54"/><ellipse cx="982.9" cy="191.1" rx="2.6" ry="1.9" fill="#b9dba0" opacity="0.39"/><ellipse cx="1090.3" cy="160.2" rx="3.4" ry="2.2" fill="#b9dba0" opacity="0.41"/><ellipse cx="966.2" cy="148.3" rx="1.2" ry="0.7" fill="#b9dba0" opacity="0.48"/><ellipse cx="1048.3" cy="156.9" rx="1.5" ry="1.3" fill="#b9dba0" opacity="0.58"/><ellipse cx="1068.1" cy="161.8" rx="1.7" ry="1.1" fill="#b9dba0" opacity="0.36"/><ellipse cx="1017.5" cy="313.9" rx="2.2" ry="1.8" fill="#b9dba0" opacity="0.58"/><ellipse cx="960.3" cy="225.3" rx="2.1" ry="1.6" fill="#b9dba0" opacity="0.26"/><ellipse cx="962.6" cy="258.3" rx="1.6" ry="1.1" fill="#b9dba0" opacity="0.57"/><ellipse cx="1030.7" cy="191.0" rx="1.7" ry="1.0" fill="#b9dba0" opacity="0.30"/><ellipse cx="969.8" cy="177.3" rx="1.2" ry="0.9" fill="#b9dba0" opacity="0.39"/><ellipse cx="1073.2" cy="223.8" rx="2.0" ry="1.2" fill="#b9dba0" opacity="0.57"/><ellipse cx="1015.0" cy="337.7" rx="3.1" ry="2.2" fill="#b9dba0" opacity="0.49"/><ellipse cx="1007.4" cy="194.7" rx="2.6" ry="2.0" fill="#b9dba0" opacity="0.49"/><ellipse cx="1021.2" cy="250.9" rx="1.1" ry="0.9" fill="#b9dba0" opacity="0.49"/><ellipse cx="1035.5" cy="135.5" rx="1.4" ry="1.3" fill="#b9dba0" opacity="0.34"/><ellipse cx="977.8" cy="316.0" rx="1.3" ry="1.1" fill="#b9dba0" opacity="0.35"/><ellipse cx="1054.8" cy="160.0" rx="1.0" ry="0.9" fill="#b9dba0" opacity="0.43"/><ellipse cx="1084.0" cy="263.9" rx="1.8" ry="1.0" fill="#b9dba0" opacity="0.51"/><ellipse cx="985.6" cy="321.5" rx="2.1" ry="1.6" fill="#b9dba0" opacity="0.56"/><ellipse cx="992.7" cy="157.2" rx="3.4" ry="1.9" fill="#b9dba0" opacity="0.48"/><ellipse cx="1059.6" cy="197.1" rx="1.3" ry="0.7" fill="#b9dba0" opacity="0.27"/><ellipse cx="1047.6" cy="212.0" rx="2.3" ry="1.3" fill="#b9dba0" opacity="0.34"/><ellipse cx="960.3" cy="173.3" rx="2.0" ry="1.4" fill="#b9dba0" opacity="0.44"/><ellipse cx="1067.5" cy="331.7" rx="1.1" ry="0.7" fill="#b9dba0" opacity="0.26"/><ellipse cx="996.3" cy="166.5" rx="2.0" ry="1.9" fill="#b9dba0" opacity="0.35"/><ellipse cx="1089.1" cy="286.6" rx="2.8" ry="1.7" fill="#b9dba0" opacity="0.39"/><ellipse cx="968.0" cy="280.0" rx="0.9" ry="0.8" fill="#b9dba0" opacity="0.39"/><ellipse cx="963.1" cy="219.7" rx="2.0" ry="1.5" fill="#b9dba0" opacity="0.53"/><ellipse cx="1034.2" cy="308.3" rx="0.9" ry="0.8" fill="#b9dba0" opacity="0.28"/><ellipse cx="1093.3" cy="205.8" rx="1.6" ry="1.5" fill="#b9dba0" opacity="0.50"/><ellipse cx="996.2" cy="167.0" rx="2.2" ry="1.7" fill="#b9dba0" opacity="0.37"/><ellipse cx="967.7" cy="318.0" rx="2.4" ry="1.9" fill="#b9dba0" opacity="0.36"/><ellipse cx="1002.5" cy="287.6" rx="3.2" ry="2.0" fill="#b9dba0" opacity="0.44"/><ellipse cx="1080.4" cy="202.1" rx="1.6" ry="0.9" fill="#b9dba0" opacity="0.26"/><ellipse cx="956.7" cy="337.4" rx="1.3" ry="0.8" fill="#b9dba0" opacity="0.47"/><ellipse cx="950.0" cy="137.3" rx="2.1" ry="1.8" fill="#b9dba0" opacity="0.44"/><ellipse cx="1075.0" cy="169.4" rx="3.3" ry="2.0" fill="#b9dba0" opacity="0.39"/><ellipse cx="1077.2" cy="284.7" rx="2.5" ry="1.8" fill="#b9dba0" opacity="0.53"/><ellipse cx="1033.1" cy="346.3" rx="3.2" ry="2.0" fill="#b9dba0" opacity="0.42"/><ellipse cx="1088.9" cy="167.7" rx="2.9" ry="1.7" fill="#b9dba0" opacity="0.38"/><ellipse cx="1114.0" cy="277.7" rx="0.8" ry="0.8" fill="#b9dba0" opacity="0.45"/><ellipse cx="997.0" cy="192.4" rx="1.3" ry="0.7" fill="#b9dba0" opacity="0.54"/><ellipse cx="1038.2" cy="232.8" rx="2.0" ry="1.6" fill="#b9dba0" opacity="0.59"/><ellipse cx="954.1" cy="162.2" rx="1.1" ry="0.8" fill="#b9dba0" opacity="0.60"/><ellipse cx="1086.2" cy="345.9" rx="1.0" ry="1.0" fill="#b9dba0" opacity="0.35"/><ellipse cx="950.8" cy="251.2" rx="2.4" ry="1.7" fill="#b9dba0" opacity="0.46"/><ellipse cx="1065.3" cy="238.6" rx="1.1" ry="1.1" fill="#b9dba0" opacity="0.41"/><ellipse cx="1026.0" cy="173.7" rx="3.2" ry="1.8" fill="#b9dba0" opacity="0.29"/><ellipse cx="942.1" cy="212.7" rx="1.7" ry="1.6" fill="#b9dba0" opacity="0.55"/><ellipse cx="999.8" cy="334.9" rx="1.2" ry="1.1" fill="#b9dba0" opacity="0.59"/><ellipse cx="1043.6" cy="316.6" rx="2.3" ry="1.5" fill="#b9dba0" opacity="0.59"/><ellipse cx="1104.0" cy="157.9" rx="3.1" ry="2.2" fill="#b9dba0" opacity="0.58"/><ellipse cx="985.1" cy="140.6" rx="1.5" ry="1.0" fill="#b9dba0" opacity="0.38"/><ellipse cx="985.3" cy="215.8" rx="1.5" ry="1.0" fill="#b9dba0" opacity="0.48"/><ellipse cx="957.5" cy="337.4" rx="2.2" ry="1.7" fill="#b9dba0" opacity="0.30"/><ellipse cx="1102.2" cy="252.2" rx="2.6" ry="1.4" fill="#b9dba0" opacity="0.51"/><ellipse cx="1057.5" cy="320.4" rx="2.5" ry="1.5" fill="#b9dba0" opacity="0.32"/><ellipse cx="1090.4" cy="140.4" rx="1.7" ry="1.5" fill="#b9dba0" opacity="0.57"/><ellipse cx="1017.4" cy="175.7" rx="2.1" ry="1.5" fill="#b9dba0" opacity="0.25"/><ellipse cx="957.1" cy="291.9" rx="1.7" ry="1.0" fill="#b9dba0" opacity="0.55"/><ellipse cx="1094.4" cy="173.4" rx="2.7" ry="1.8" fill="#b9dba0" opacity="0.38"/><ellipse cx="944.2" cy="229.9" rx="2.7" ry="1.5" fill="#b9dba0" opacity="0.32"/><ellipse cx="954.1" cy="287.8" rx="1.3" ry="1.0" fill="#b9dba0" opacity="0.60"/><ellipse cx="997.4" cy="204.5" rx="1.1" ry="0.9" fill="#b9dba0" opacity="0.50"/><ellipse cx="997.4" cy="310.2" rx="1.1" ry="0.8" fill="#b9dba0" opacity="0.41"/><ellipse cx="1100.8" cy="158.1" rx="2.2" ry="1.7" fill="#b9dba0" opacity="0.29"/><ellipse cx="1047.5" cy="301.8" rx="2.1" ry="1.4" fill="#b9dba0" opacity="0.46"/><ellipse cx="1014.7" cy="175.9" rx="2.5" ry="1.5" fill="#b9dba0" opacity="0.60"/><ellipse cx="1037.9" cy="207.3" rx="2.6" ry="1.6" fill="#b9dba0" opacity="0.34"/><ellipse cx="1061.1" cy="354.8" rx="2.8" ry="2.1" fill="#b9dba0" opacity="0.48"/><path d="M1116 204.2L1093.5 210.7L1077.1 219.6L1064.1 228.7L1051 237.8L1041.2 246.7L1036.3 258L1033.1 271.1L1034.7 277.7L1047.8 282.6L1070.6 287.5L1087 287.5L1103.3 282.6L1116 277.7Z" fill="#aad3df"/><path d="M982.4 356L997.1 343L1024.9 334.8L1070.6 329.9L1093.5 326.7L1116 320.1L1116 356Z" fill="#aad3df"/><path d="M1100 356L1106 348L1116 341L1116 356Z" fill="#ebeae1"/><path d="M1054.3 135L1057.6 158.5L1064.1 156.9L1077.1 147L1088.6 135Z" fill="#aad3df"/><path d="M1106.5 165L1116 160L1116 183L1109 180Z" fill="#aad3df"/><path d="M970 190L973 186L976 192L972 194Z" fill="#aad3df"/><path d="M942 220L946 224L944 226Z" fill="#aad3df"/><path d="M1092 135L1096 150L1116 143" fill="none" stroke="#e9b49c" stroke-width="0.8"/><path d="M1116 240L1085 255L1098.5 279L1098.5 292L1102 312L1110 315.5L1110 331L1066 356" fill="none" stroke="#a396b8" stroke-width="1.6"/><path d="M1039.8 135L1047 180L1054.7 219.7L1058 240" fill="none" stroke="#e3849b" stroke-width="1.3"/><path d="M1062 160L1067 188L1070 220L1072 232" fill="none" stroke="#e3849b" stroke-width="1.3"/><path d="M941 300L974 268L996 254L1030 245L1060 232L1090 222L1116 212" fill="none" stroke="#e3849b" stroke-width="1.3"/><path d="M941 300L989 289L1013 285L1030 279" fill="none" stroke="#e3849b" stroke-width="1.3"/><path d="M1030 279L1045 284L1080 291L1100 294L1116 302" fill="none" stroke="#e3849b" stroke-width="1.3"/><path d="M1030 215L1060 209L1090 201L1116 196" fill="none" stroke="#e3849b" stroke-width="1.3"/><path d="M1024 218L1040 238L1047 252L1045 262L1030 276" fill="none" stroke="#e3849b" stroke-width="1.3"/><path d="M1036 230L1050 226L1064 228" fill="none" stroke="#e3849b" stroke-width="1.3"/><path d="M1020 250L1040 244" fill="none" stroke="#e3849b" stroke-width="1.3"/><path d="M1028 262L1040 252" fill="none" stroke="#e3849b" stroke-width="1.3"/><path d="M962 246L968 256L983 262" fill="none" stroke="#e3849b" stroke-width="1.3"/><path d="M994 246L1000 255" fill="none" stroke="#e3849b" stroke-width="1.3"/><path d="M1087 196L1092 212" fill="none" stroke="#e3849b" stroke-width="1.3"/><path d="M1100 294L1108 310L1116 318" fill="none" stroke="#e3849b" stroke-width="1.3"/><path d="M1080 291L1083 310" fill="none" stroke="#e3849b" stroke-width="1.3"/><path d="M1113 320L1116 335" fill="none" stroke="#e3849b" stroke-width="1.3"/><path d="M1101 340L1110 348L1116 346" fill="none" stroke="#e3849b" stroke-width="1.3"/><path d="M1013 285L1018 298" fill="none" stroke="#e3849b" stroke-width="1.3"/><path d="M1030 279L1026 290" fill="none" stroke="#e3849b" stroke-width="1.3"/><path d="M1110 160L1104 196" fill="none" stroke="#e3849b" stroke-width="1.3"/><path d="M998 256L1010 268L1016 292" fill="none" stroke="#f0b089" stroke-width="0.8"/><circle cx="1060.9" cy="178.5" r="1.3" fill="#ffffff" stroke="#555" stroke-width="0.8"/><circle cx="1067.8" cy="229.6" r="2.2" fill="#ffffff" stroke="#555" stroke-width="0.8"/><circle cx="1044.8" cy="237.8" r="2.2" fill="#ffffff" stroke="#555" stroke-width="0.8"/><circle cx="966.9" cy="254.8" r="1.5" fill="#ffffff" stroke="#555" stroke-width="0.8"/><circle cx="988" cy="293.9" r="1.5" fill="#ffffff" stroke="#555" stroke-width="0.8"/><circle cx="943" cy="294.9" r="1.5" fill="#ffffff" stroke="#555" stroke-width="0.8"/><circle cx="1023.9" cy="280" r="2.6" fill="#ffffff" stroke="#555" stroke-width="0.8"/><circle cx="1080.4" cy="291.2" r="1.3" fill="#ffffff" stroke="#555" stroke-width="0.8"/><circle cx="1040" cy="135.5" r="1.3" fill="#ffffff" stroke="#555" stroke-width="0.8"/><text x="1034.5" y="174.4" font-family="Liberation Sans" font-size="10.3" letter-spacing="0" fill="#222" stroke="#f4f3ee" stroke-width="2.2" stroke-linejoin="round" paint-order="stroke">Newmarket</text><text x="1050.5" y="199.9" font-family="Liberation Sans" font-size="10.3" letter-spacing="0" fill="#222" stroke="#f4f3ee" stroke-width="2.2" stroke-linejoin="round" paint-order="stroke">Markham</text><text x="1047" y="224.6" font-family="Liberation Sans" font-size="12.6" letter-spacing="0" fill="#222" stroke="#f4f3ee" stroke-width="2.2" stroke-linejoin="round" paint-order="stroke">Toronto</text><text x="1010.5" y="252" font-family="Liberation Sans" font-size="12.6" letter-spacing="0.2" fill="#222" stroke="#f4f3ee" stroke-width="2.2" stroke-linejoin="round" paint-order="stroke">Mississauga</text><text x="945.5" y="265.6" font-family="Liberation Sans" font-size="10.3" letter-spacing="0" fill="#222" stroke="#f4f3ee" stroke-width="2.2" stroke-linejoin="round" paint-order="stroke">Kitchener</text><text x="998.5" y="274" font-family="Liberation Sans" font-size="12.2" letter-spacing="0.2" fill="#222" stroke="#f4f3ee" stroke-width="2.2" stroke-linejoin="round" paint-order="stroke">Hamilton</text><text x="965.6" y="289.4" font-family="Liberation Sans" font-size="10.3" letter-spacing="0" fill="#222" stroke="#f4f3ee" stroke-width="2.2" stroke-linejoin="round" paint-order="stroke">Brantford</text><text x="937" y="306.1" font-family="Liberation Sans" font-size="10.3" letter-spacing="0" fill="#222" stroke="#f4f3ee" stroke-width="2.2" stroke-linejoin="round" paint-order="stroke">odstock</text><text x="1048.5" y="303.1" font-family="Liberation Sans" font-size="10.3" letter-spacing="0" fill="#222" stroke="#f4f3ee" stroke-width="2.2" stroke-linejoin="round" paint-order="stroke">St. Catharines</text><text x="1097.5" y="321" font-family="Liberation Sans" font-size="10.3" letter-spacing="0" fill="#222" stroke="#f4f3ee" stroke-width="2.2" stroke-linejoin="round" paint-order="stroke">Buffalo</text><path d="M1072 221.5 C1070.5 208 1063.2 203 1063.2 199 A8.8 8.8 0 1 1 1080.8 199 C1080.8 203 1073.5 208 1072 221.5Z" fill="#6d9cf6" stroke="#000" stroke-width="1.7"/><path d="M983 265 C981.5 252 974.2 247 974.2 243 A8.8 8.8 0 1 1 991.8 243 C991.8 247 984.5 252 983 265Z" fill="#6d9cf6" stroke="#000" stroke-width="1.7"/></g></svg>
<div class="r" style="left:726px;top:360px;width:56px;height:32px;background:#3a393e"></div>
<div class="r" style="left:726px;top:392px;width:389px;height:1px;background:#5a585b"></div>
<div class="r" style="left:726px;top:391px;width:56px;height:2px;background:#747c86"></div>
<div class="t" style="left:736.00px;top:368px;">Table</div>
<div class="t" style="left:792.50px;top:368px;">Chart</div>
<div class="r" style="left:728px;top:395px;width:385px;height:236px;border:1px solid #5e5c5f;box-sizing:border-box"></div><div class="r" style="left:1102px;top:396px;width:10px;height:234px;background:#2e2a2d"></div><div class="r" style="left:729px;top:620px;width:373px;height:10px;background:#2e2a2d"></div><div class="r" style="left:729px;top:396px;width:373px;height:24px;background:#3a393e"></div><div class="r" style="left:729px;top:420px;width:373px;height:1px;background:#252326"></div><div class="t" style="left:732.50px;top:400px;">Name</div><div class="r" style="left:818px;top:396px;width:1px;height:24px;background:#2a292e"></div><div class="t" style="left:822.50px;top:400px;font-weight:bold;">Country</div><div class="r" style="left:893px;top:396px;width:1px;height:24px;background:#2a292e"></div><div class="t" style="left:897.50px;top:400px;">District</div><div class="r" style="left:1011px;top:396px;width:1px;height:24px;background:#2a292e"></div><div class="t" style="left:1012px;width:88px;top:400px;text-align:right;">Population</div><div class="r" style="left:729px;top:421px;width:373px;height:199px;overflow:hidden"><div class="r" style="left:0;top:0px;width:373px;height:19px;background:#1f1d21"></div><div class="r" style="left:90px;top:0px;width:75px;height:19px;background:rgba(0,0,0,0.08)"></div><div class="t" style="left:0.30px;top:1px;">Burlington</div><div class="t" style="left:90.30px;top:1px;">Canada</div><div class="t" style="left:165.30px;top:1px;">Ontario</div><div class="t" style="left:283px;width:80px;top:1px;text-align:right;">145,150</div><div class="r" style="left:0;top:19px;width:373px;height:19px;background:#2a292e"></div><div class="r" style="left:90px;top:19px;width:75px;height:19px;background:rgba(0,0,0,0.08)"></div><div class="t" style="left:0.30px;top:20px;">Burnaby</div><div class="t" style="left:90.30px;top:20px;">Canada</div><div class="t" style="left:165.30px;top:20px;">British Colombia</div><div class="t" style="left:283px;width:80px;top:20px;text-align:right;">179,209</div><div class="r" style="left:0;top:38px;width:373px;height:19px;background:#1f1d21"></div><div class="r" style="left:90px;top:38px;width:75px;height:19px;background:rgba(0,0,0,0.08)"></div><div class="t" style="left:0.30px;top:39px;">Calgary</div><div class="t" style="left:90.30px;top:39px;">Canada</div><div class="t" style="left:165.30px;top:39px;">Alberta</div><div class="t" style="left:283px;width:80px;top:39px;text-align:right;">768,082</div><div class="r" style="left:0;top:57px;width:373px;height:19px;background:#464448"></div><div class="r" style="left:90px;top:57px;width:75px;height:19px;background:rgba(0,0,0,0.08)"></div><div class="t" style="left:0.30px;top:58px;color:#f2c752;">Cambridge</div><div class="t" style="left:90.30px;top:58px;color:#f2c752;">Canada</div><div class="t" style="left:165.30px;top:58px;color:#f2c752;">Ontario</div><div class="t" style="left:283px;width:80px;top:58px;text-align:right;color:#f2c752;">109,186</div><div class="r" style="left:0;top:76px;width:373px;height:19px;background:#1f1d21"></div><div class="r" style="left:90px;top:76px;width:75px;height:19px;background:rgba(0,0,0,0.08)"></div><div class="t" style="left:0.30px;top:77px;">Cape Breton</div><div class="t" style="left:90.30px;top:77px;">Canada</div><div class="t" style="left:165.30px;top:77px;">Nova Scotia</div><div class="t" style="left:283px;width:80px;top:77px;text-align:right;">114,733</div><div class="r" style="left:0;top:95px;width:373px;height:19px;background:#2a292e"></div><div class="r" style="left:90px;top:95px;width:75px;height:19px;background:rgba(0,0,0,0.08)"></div><div class="t" style="left:0.30px;top:96px;">Coquitlam</div><div class="t" style="left:90.30px;top:96px;">Canada</div><div class="t" style="left:165.30px;top:96px;">British Colombia</div><div class="t" style="left:283px;width:80px;top:96px;text-align:right;">101,820</div><div class="r" style="left:0;top:114px;width:373px;height:19px;background:#1f1d21"></div><div class="r" style="left:90px;top:114px;width:75px;height:19px;background:rgba(0,0,0,0.08)"></div><div class="t" style="left:0.30px;top:115px;">Delta</div><div class="t" style="left:90.30px;top:115px;">Canada</div><div class="t" style="left:165.30px;top:115px;">British Colombia</div><div class="t" style="left:283px;width:80px;top:115px;text-align:right;">95,411</div><div class="r" style="left:0;top:133px;width:373px;height:19px;background:#464448"></div><div class="r" style="left:90px;top:133px;width:75px;height:19px;background:rgba(0,0,0,0.08)"></div><div class="t" style="left:0.30px;top:134px;color:#f2c752;">East York</div><div class="t" style="left:90.30px;top:134px;color:#f2c752;">Canada</div><div class="t" style="left:165.30px;top:134px;color:#f2c752;">Ontario</div><div class="t" style="left:283px;width:80px;top:134px;text-align:right;color:#f2c752;">114,034</div><div class="r" style="left:0;top:152px;width:373px;height:19px;background:#1f1d21"></div><div class="r" style="left:90px;top:152px;width:75px;height:19px;background:rgba(0,0,0,0.08)"></div><div class="t" style="left:0.30px;top:153px;">Edmonton</div><div class="t" style="left:90.30px;top:153px;">Canada</div><div class="t" style="left:165.30px;top:153px;">Alberta</div><div class="t" style="left:283px;width:80px;top:153px;text-align:right;">616,306</div><div class="r" style="left:0;top:171px;width:373px;height:19px;background:#2a292e"></div><div class="r" style="left:90px;top:171px;width:75px;height:19px;background:rgba(0,0,0,0.08)"></div><div class="t" style="left:0.30px;top:172px;">Etobicoke</div><div class="t" style="left:90.30px;top:172px;">Canada</div><div class="t" style="left:165.30px;top:172px;">Ontario</div><div class="t" style="left:283px;width:80px;top:172px;text-align:right;">348,845</div><div class="r" style="left:0;top:190px;width:373px;height:19px;background:#1f1d21"></div><div class="r" style="left:90px;top:190px;width:75px;height:19px;background:rgba(0,0,0,0.08)"></div><div class="t" style="left:0.30px;top:191px;">Gatineau</div><div class="t" style="left:90.30px;top:191px;">Canada</div><div class="t" style="left:165.30px;top:191px;">Québec</div><div class="t" style="left:283px;width:80px;top:191px;text-align:right;">100,702</div></div><div class="r" style="left:1104px;top:412px;width:6px;height:43px;background:#8a7444;border-radius:3px"></div><div class="r" style="left:731px;top:622px;width:276px;height:6px;background:#8a7444;border-radius:3px"></div>
<div class="r" style="left:728px;top:638px;width:96px;height:24px;background:#1f1d21;border:1px solid #5e5c5f;box-sizing:border-box"></div>
<div class="t" style="left:735.30px;top:642px;color:#b0b0b0;will-change:transform;">Find...</div>
<div class="r" style="left:826.5px;top:643.5px;width:3px;height:3px;border-radius:50%;background:#e6e6e6"></div><div class="r" style="left:826.5px;top:648.5px;width:3px;height:3px;border-radius:50%;background:#e6e6e6"></div><div class="r" style="left:826.5px;top:653.5px;width:3px;height:3px;border-radius:50%;background:#e6e6e6"></div>
<div class="t" style="left:845.40px;top:642px;">49 (2 selected)</div>
<svg class="r" style="left:966px;top:642.5px" width="12" height="15" viewBox="0 0 12 15"><path d="M11 1.3H1.6L6.2 7.4L1.6 13.5H11" fill="none" stroke="#f4f4f4" stroke-width="2.5" stroke-linejoin="miter" stroke-miterlimit="3"/></svg>
<svg class="r" style="left:989.2px;top:641px" width="16" height="17" viewBox="0 0 16 17"><circle cx="9.3" cy="7.2" r="5.6" fill="none" stroke="#f4f4f4" stroke-width="2.3"/><path d="M5.3 11.4L1.7 15" stroke="#f4f4f4" stroke-width="3" stroke-linecap="round"/></svg>
<div class="r" style="left:1014px;top:637px;width:1px;height:27px;background:#4a494d"></div>
<div class="r" style="left:1048px;top:637px;width:1px;height:27px;background:#4a494d"></div>
<div class="r" style="left:1082px;top:637px;width:1px;height:27px;background:#4a494d"></div>
<svg class="r" style="left:1024.8px;top:642px" width="13" height="16" viewBox="0 0 13 16"><rect x="0" y="1.3" width="13" height="2" fill="#f4f4f4"/><rect x="4" y="0" width="5" height="1.6" fill="#f4f4f4"/><path d="M0.8 3.8H12.2L11.7 15.5H1.3Z" fill="#f4f4f4"/></svg>
<svg class="r" style="left:1057px;top:641px" width="18" height="16" viewBox="0 0 18 16"><path d="M5 1H10 M12 15H1V5L5 1V5H1" fill="none" stroke="#f4f4f4" stroke-width="2"/><path d="M6.5 12.5L7 9.5L14.5 2L17 4.5L9.5 12Z" fill="#f4f4f4"/><path d="M5.5 13.5L7 9.5L9.5 12Z" fill="#f4f4f4"/></svg>
<svg class="r" style="left:1093px;top:643px" width="14" height="13" viewBox="0 0 14 13"><rect x="0" y="0" width="3" height="3" fill="#f4f4f4"/><rect x="4.5" y="0" width="8.5" height="3" fill="#f4f4f4"/><rect x="0" y="5" width="3" height="3" fill="#f4f4f4"/><rect x="4.5" y="5" width="8.5" height="3" fill="#f4f4f4"/><rect x="0" y="10" width="3" height="3" fill="#f4f4f4"/><rect x="4.5" y="10" width="8.5" height="3" fill="#f4f4f4"/></svg>
</body></html>
